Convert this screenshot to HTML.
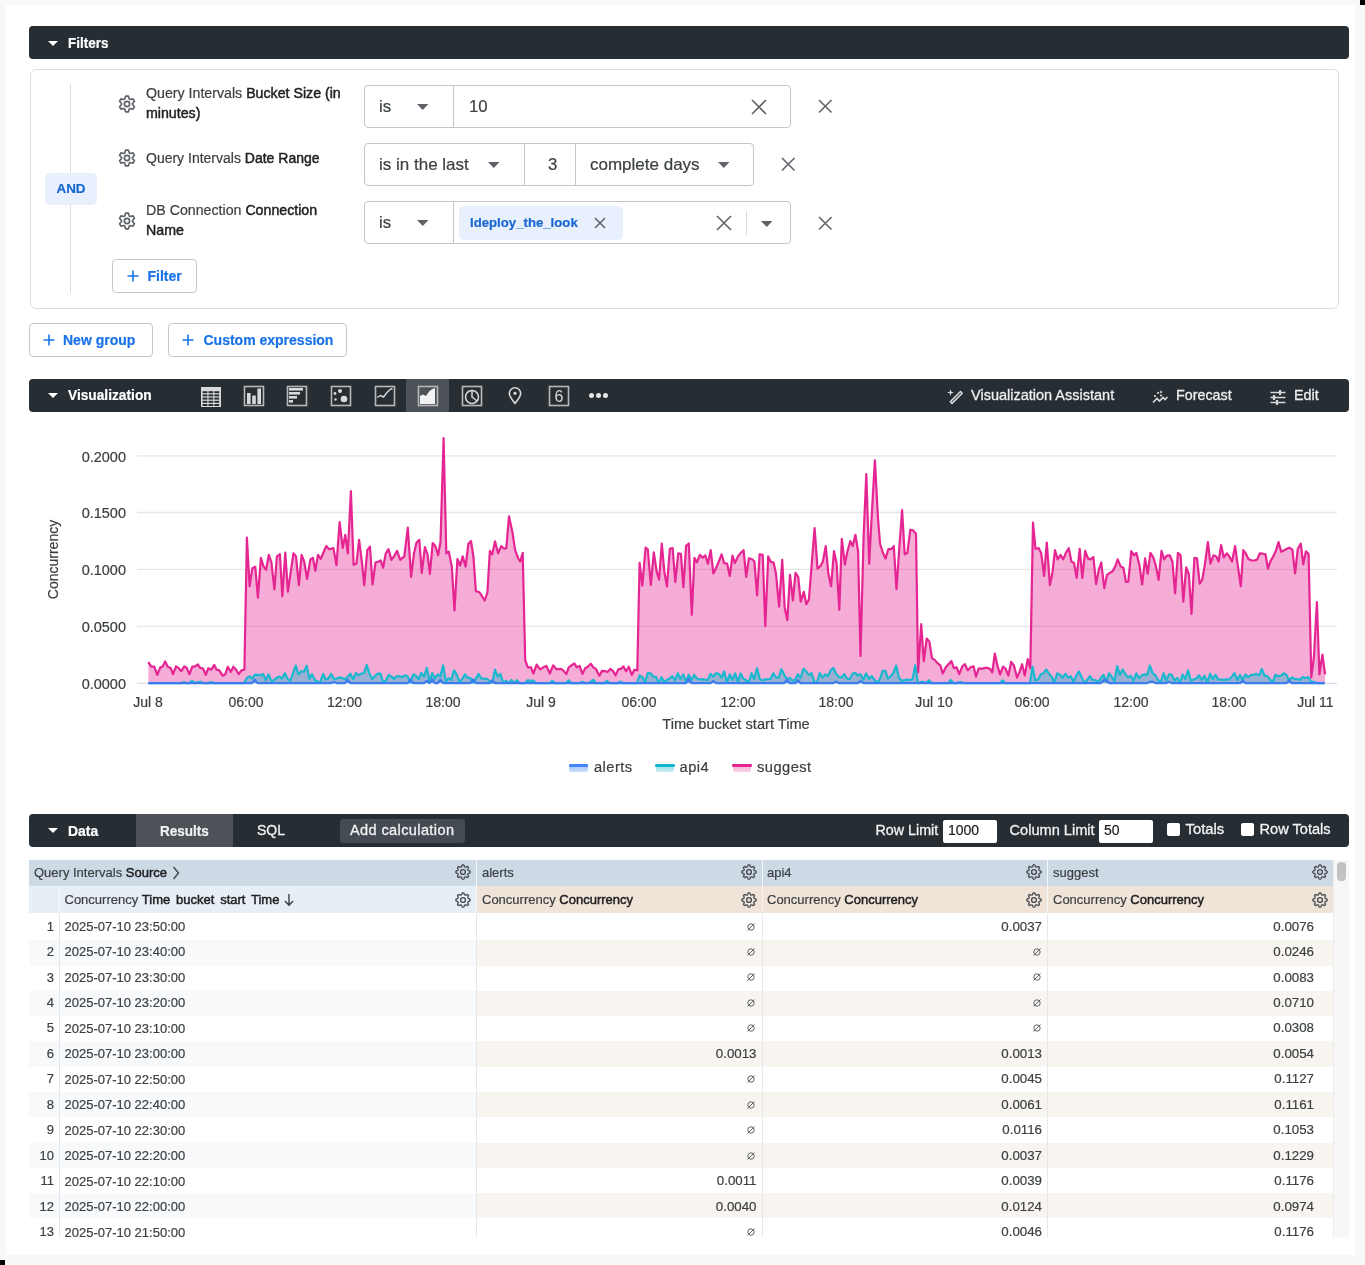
<!DOCTYPE html>
<html><head><meta charset="utf-8">
<style>
*{box-sizing:border-box;margin:0;padding:0}
html,body{width:1365px;height:1265px;overflow:hidden;background:#f7f8f8;font-family:"Liberation Sans",sans-serif;color:#3c4043;-webkit-text-stroke-width:0.2px}
.abs{position:absolute}
.tx{white-space:nowrap}
.med{-webkit-text-stroke:0.25px currentColor}
.m{-webkit-text-stroke:0.45px #202124;color:#202124}
b{font-weight:bold}
</style></head><body>
<div id="wrap" style="position:absolute;left:0;top:0;width:1365px;height:1265px;will-change:transform">
<div class="abs" style="left:6px;top:5px;width:1349px;height:1250px;background:#fff"></div>
<div class="abs" style="left:1360px;top:0;width:5px;height:5px;background:#000"></div>
<div class="abs" style="left:0;top:1260px;width:5px;height:5px;background:#000"></div>

<div class="abs" style="left:29px;top:26px;width:1320px;height:33px;background:#262d33;border-radius:4px"></div>
<svg class="abs" style="left:48.0px;top:40.5px" width="10" height="5"><path d="M0,0 L10,0 L5.0,5Z" fill="#fff"/></svg>
<div class="abs tx" style="left:68px;top:33.8px;font-size:15px;line-height:18.0px;color:#fff;font-weight:bold;transform:scaleX(0.9);transform-origin:0 50%">Filters</div>
<div class="abs" style="left:30px;top:69px;width:1309px;height:240px;border:1px solid #dcdcdc;border-radius:6px"></div>
<div class="abs" style="left:70px;top:84px;width:1px;height:209px;background:#dadce0"></div>
<div class="abs" style="left:45px;top:173px;width:52px;height:32px;background:#e8f0fe;border-radius:5px"></div>
<div class="abs tx" style="left:56.5px;top:181.0px;font-size:13.4px;line-height:16.1px;color:#1967d2;font-weight:bold;">AND</div>
<svg class="abs" style="left:115.0px;top:92.0px" width="24" height="24" viewBox="0 0 24 24"><path d="M9.68,7.02 L10.63,4.22 L13.37,4.22 L14.32,7.02 L15.15,7.49 L18.05,6.92 L19.42,9.30 L17.48,11.52 L17.48,12.48 L19.42,14.70 L18.05,17.08 L15.15,16.51 L14.32,16.98 L13.37,19.78 L10.63,19.78 L9.68,16.98 L8.85,16.51 L5.95,17.08 L4.58,14.70 L6.52,12.48 L6.52,11.52 L4.58,9.30 L5.95,6.92 L8.85,7.49Z" fill="none" stroke="#5f6368" stroke-width="1.70" stroke-linejoin="round"/><circle cx="12" cy="12" r="2.6" fill="none" stroke="#5f6368" stroke-width="1.70"/></svg>
<svg class="abs" style="left:115.0px;top:146.0px" width="24" height="24" viewBox="0 0 24 24"><path d="M9.68,7.02 L10.63,4.22 L13.37,4.22 L14.32,7.02 L15.15,7.49 L18.05,6.92 L19.42,9.30 L17.48,11.52 L17.48,12.48 L19.42,14.70 L18.05,17.08 L15.15,16.51 L14.32,16.98 L13.37,19.78 L10.63,19.78 L9.68,16.98 L8.85,16.51 L5.95,17.08 L4.58,14.70 L6.52,12.48 L6.52,11.52 L4.58,9.30 L5.95,6.92 L8.85,7.49Z" fill="none" stroke="#5f6368" stroke-width="1.70" stroke-linejoin="round"/><circle cx="12" cy="12" r="2.6" fill="none" stroke="#5f6368" stroke-width="1.70"/></svg>
<svg class="abs" style="left:115.0px;top:208.5px" width="24" height="24" viewBox="0 0 24 24"><path d="M9.68,7.02 L10.63,4.22 L13.37,4.22 L14.32,7.02 L15.15,7.49 L18.05,6.92 L19.42,9.30 L17.48,11.52 L17.48,12.48 L19.42,14.70 L18.05,17.08 L15.15,16.51 L14.32,16.98 L13.37,19.78 L10.63,19.78 L9.68,16.98 L8.85,16.51 L5.95,17.08 L4.58,14.70 L6.52,12.48 L6.52,11.52 L4.58,9.30 L5.95,6.92 L8.85,7.49Z" fill="none" stroke="#5f6368" stroke-width="1.70" stroke-linejoin="round"/><circle cx="12" cy="12" r="2.6" fill="none" stroke="#5f6368" stroke-width="1.70"/></svg>
<div class="abs" style="left:146px;top:84px;font-size:14.2px;line-height:19.5px;color:#3c4043;width:215px">Query Intervals <span class="m">Bucket Size (in minutes)</span></div>
<div class="abs tx" style="left:146px;top:149.6px;font-size:14px;line-height:16.8px;color:#3c4043;font-weight:normal;">Query Intervals <span class="m">Date Range</span></div>
<div class="abs" style="left:146px;top:201px;font-size:14.2px;line-height:19.5px;color:#3c4043;width:200px">DB Connection <span class="m">Connection Name</span></div>
<div class="abs" style="left:364px;top:85px;width:427px;height:43px;border:1px solid #c6c6c6;border-radius:4px"></div><div class="abs" style="left:453px;top:85px;width:1px;height:43px;background:#c6c6c6"></div>
<div class="abs tx" style="left:379px;top:96.9px;font-size:16.8px;line-height:20.2px;color:#3c4043;font-weight:normal;">is</div>
<svg class="abs" style="left:417.2px;top:103.5px" width="11.5" height="6"><path d="M0,0 L11.5,0 L5.75,6Z" fill="#5f6368"/></svg>
<div class="abs tx" style="left:469px;top:96.9px;font-size:16.8px;line-height:20.2px;color:#3c4043;font-weight:normal;">10</div>
<svg class="abs" style="left:750.0px;top:97.5px" width="18" height="18"><path d="M2,2 L16,16 M16,2 L2,16" stroke="#62666b" stroke-width="1.65"/></svg>
<svg class="abs" style="left:817.2px;top:97.8px" width="16.5" height="16.5"><path d="M2,2 L14.5,14.5 M14.5,2 L2,14.5" stroke="#62666b" stroke-width="1.65"/></svg>
<div class="abs" style="left:364px;top:143px;width:390px;height:43px;border:1px solid #c6c6c6;border-radius:4px"></div><div class="abs" style="left:524px;top:143px;width:1px;height:43px;background:#c6c6c6"></div><div class="abs" style="left:575px;top:143px;width:1px;height:43px;background:#c6c6c6"></div>
<div class="abs tx" style="left:379px;top:154.8px;font-size:17px;line-height:20.4px;color:#3c4043;font-weight:normal;">is in the last</div>
<svg class="abs" style="left:487.8px;top:162.0px" width="11.5" height="6"><path d="M0,0 L11.5,0 L5.75,6Z" fill="#5f6368"/></svg>
<div class="abs tx" style="left:548px;top:154.9px;font-size:16.8px;line-height:20.2px;color:#3c4043;font-weight:normal;">3</div>
<div class="abs tx" style="left:590px;top:154.8px;font-size:17px;line-height:20.4px;color:#3c4043;font-weight:normal;">complete days</div>
<svg class="abs" style="left:718.2px;top:162.0px" width="11.5" height="6"><path d="M0,0 L11.5,0 L5.75,6Z" fill="#5f6368"/></svg>
<svg class="abs" style="left:779.8px;top:156.2px" width="16.5" height="16.5"><path d="M2,2 L14.5,14.5 M14.5,2 L2,14.5" stroke="#62666b" stroke-width="1.65"/></svg>
<div class="abs" style="left:364px;top:201px;width:427px;height:43px;border:1px solid #c6c6c6;border-radius:4px"></div><div class="abs" style="left:453px;top:201px;width:1px;height:43px;background:#c6c6c6"></div>
<div class="abs tx" style="left:379px;top:212.9px;font-size:16.8px;line-height:20.2px;color:#3c4043;font-weight:normal;">is</div>
<svg class="abs" style="left:417.2px;top:220.0px" width="11.5" height="6"><path d="M0,0 L11.5,0 L5.75,6Z" fill="#5f6368"/></svg>
<div class="abs" style="left:459px;top:205.5px;width:164px;height:34px;background:#e8f0fe;border-radius:5px"></div>
<div class="abs tx" style="left:470px;top:214.6px;font-size:13.2px;line-height:15.8px;color:#1967d2;font-weight:bold;">ldeploy_the_look</div>
<svg class="abs" style="left:592.5px;top:215.5px" width="14" height="14"><path d="M2,2 L12,12 M12,2 L2,12" stroke="#5f6368" stroke-width="1.5"/></svg>
<svg class="abs" style="left:715.0px;top:214.0px" width="18" height="18"><path d="M2,2 L16,16 M16,2 L2,16" stroke="#62666b" stroke-width="1.65"/></svg>
<div class="abs" style="left:746px;top:211px;width:1px;height:24px;background:#dadce0"></div>
<svg class="abs" style="left:760.8px;top:220.5px" width="11.5" height="6"><path d="M0,0 L11.5,0 L5.75,6Z" fill="#5f6368"/></svg>
<svg class="abs" style="left:817.2px;top:214.8px" width="16.5" height="16.5"><path d="M2,2 L14.5,14.5 M14.5,2 L2,14.5" stroke="#62666b" stroke-width="1.65"/></svg>
<div class="abs" style="left:112px;top:259px;width:85px;height:34px;border:1px solid #c6c6c6;border-radius:4px;background:#fff"></div><svg class="abs" style="left:126.5px;top:270.0px" width="12" height="12"><path d="M6,0.5 V11.5 M0.5,6 H11.5" stroke="#1a73e8" stroke-width="1.6"/></svg><div class="abs tx" style="left:147.5px;top:267.6px;font-size:14px;line-height:16.8px;color:#1a73e8;font-weight:bold;">Filter</div>
<div class="abs" style="left:29px;top:323px;width:124px;height:34px;border:1px solid #c6c6c6;border-radius:4px;background:#fff"></div><svg class="abs" style="left:43px;top:334.0px" width="12" height="12"><path d="M6,0.5 V11.5 M0.5,6 H11.5" stroke="#1a73e8" stroke-width="1.6"/></svg><div class="abs tx" style="left:63px;top:331.6px;font-size:14px;line-height:16.8px;color:#1a73e8;font-weight:bold;">New group</div>
<div class="abs" style="left:168px;top:323px;width:179px;height:34px;border:1px solid #c6c6c6;border-radius:4px;background:#fff"></div><svg class="abs" style="left:182px;top:334.0px" width="12" height="12"><path d="M6,0.5 V11.5 M0.5,6 H11.5" stroke="#1a73e8" stroke-width="1.6"/></svg><div class="abs tx" style="left:203.5px;top:331.6px;font-size:14px;line-height:16.8px;color:#1a73e8;font-weight:bold;">Custom expression</div>
<div class="abs" style="left:29px;top:379px;width:1320px;height:33px;background:#262d33;border-radius:4px"></div>
<svg class="abs" style="left:48.0px;top:393.0px" width="10" height="5"><path d="M0,0 L10,0 L5.0,5Z" fill="#fff"/></svg>
<div class="abs tx" style="left:68px;top:386.3px;font-size:15px;line-height:18.0px;color:#fff;font-weight:bold;transform:scaleX(0.915);transform-origin:0 50%">Visualization</div>
<div class="abs" style="left:406px;top:379px;width:43px;height:33px;background:#4c5258"></div>
<svg class="abs" style="left:199.5px;top:385.5px" width="22" height="22" viewBox="0 0 22 22"><rect x="1" y="1" width="20" height="20" fill="#d9d9d9"/><rect x="2.6" y="5.2" width="4.8" height="2" fill="#262d33"/><rect x="8.5" y="5.2" width="4.8" height="2" fill="#262d33"/><rect x="14.4" y="5.2" width="4.8" height="2" fill="#262d33"/><rect x="2.6" y="8.4" width="4.8" height="2" fill="#262d33"/><rect x="8.5" y="8.4" width="4.8" height="2" fill="#262d33"/><rect x="14.4" y="8.4" width="4.8" height="2" fill="#262d33"/><rect x="2.6" y="11.6" width="4.8" height="2" fill="#262d33"/><rect x="8.5" y="11.6" width="4.8" height="2" fill="#262d33"/><rect x="14.4" y="11.6" width="4.8" height="2" fill="#262d33"/><rect x="2.6" y="14.8" width="4.8" height="2" fill="#262d33"/><rect x="8.5" y="14.8" width="4.8" height="2" fill="#262d33"/><rect x="14.4" y="14.8" width="4.8" height="2" fill="#262d33"/><rect x="2.6" y="18.0" width="4.8" height="2" fill="#262d33"/><rect x="8.5" y="18.0" width="4.8" height="2" fill="#262d33"/><rect x="14.4" y="18.0" width="4.8" height="2" fill="#262d33"/></svg>
<svg class="abs" style="left:242.7px;top:385px" width="22" height="22" viewBox="0 0 22 22"><rect x="1.5" y="1.5" width="19" height="19" fill="none" stroke="#b8b8b8" stroke-width="1.6"/><rect x="4" y="8" width="3.6" height="11" fill="#d9d9d9"/><rect x="9.2" y="10.5" width="3.6" height="8.5" fill="#d9d9d9"/><rect x="14.4" y="3.5" width="3.6" height="15.5" fill="#d9d9d9"/></svg>
<svg class="abs" style="left:286.2px;top:385px" width="22" height="22" viewBox="0 0 22 22"><rect x="1.5" y="1.5" width="19" height="19" fill="none" stroke="#b8b8b8" stroke-width="1.6"/><rect x="3" y="3" width="14" height="2.6" fill="#d9d9d9"/><rect x="3" y="7" width="11" height="2.6" fill="#d9d9d9"/><rect x="3" y="11" width="8" height="2.6" fill="#d9d9d9"/><rect x="3" y="15" width="4" height="2.6" fill="#d9d9d9"/></svg>
<svg class="abs" style="left:330px;top:385px" width="22" height="22" viewBox="0 0 22 22"><rect x="1.5" y="1.5" width="19" height="19" fill="none" stroke="#b8b8b8" stroke-width="1.6"/><circle cx="10" cy="6" r="2" fill="#d9d9d9"/><circle cx="5" cy="8.5" r="1.4" fill="#d9d9d9"/><circle cx="5.5" cy="14.5" r="1.2" fill="#d9d9d9"/><circle cx="14" cy="14" r="3.3" fill="#d9d9d9"/></svg>
<svg class="abs" style="left:373.5px;top:385px" width="22" height="22" viewBox="0 0 22 22"><rect x="1.5" y="1.5" width="19" height="19" fill="none" stroke="#b8b8b8" stroke-width="1.6"/><path d="M3,12.5 L6.5,10.5 L9.5,12 L13,7.5 L16,4.5 L18.5,3.5" fill="none" stroke="#d9d9d9" stroke-width="1.4"/></svg>
<svg class="abs" style="left:417px;top:385px" width="22" height="22" viewBox="0 0 22 22"><rect x="1.5" y="1.5" width="19" height="19" fill="none" stroke="#b8b8b8" stroke-width="1.6"/><path d="M3,11 L6,9.5 L9,11 L12.5,6 L15.5,4 L18,3 L18,19 L3,19Z" fill="#f2f2f2"/></svg>
<svg class="abs" style="left:460.5px;top:385px" width="22" height="22" viewBox="0 0 22 22"><rect x="1.5" y="1.5" width="19" height="19" fill="none" stroke="#b8b8b8" stroke-width="1.6"/><circle cx="11" cy="12" r="6.5" fill="none" stroke="#d9d9d9" stroke-width="1.5"/><path d="M11,5.5 V12 L16,16" fill="none" stroke="#d9d9d9" stroke-width="1.5"/></svg>
<svg class="abs" style="left:507px;top:387px" width="16" height="18" viewBox="0 0 16 18"><path d="M8,16.5 C5,12.5 2.3,9.5 2.3,6.5 A5.7,5.7 0 0 1 13.7,6.5 C13.7,9.5 11,12.5 8,16.5Z" fill="none" stroke="#d9d9d9" stroke-width="1.6" stroke-linejoin="round"/><circle cx="8" cy="6.3" r="1.6" fill="#d9d9d9"/></svg>
<svg class="abs" style="left:547.5px;top:385px" width="22" height="22" viewBox="0 0 22 22"><rect x="1.5" y="1.5" width="19" height="19" fill="none" stroke="#b8b8b8" stroke-width="1.6"/><text x="11" y="17" text-anchor="middle" font-family="Liberation Sans" font-size="16" fill="#d9d9d9">6</text></svg>
<div class="abs" style="left:589.0px;top:393.2px;width:5.2px;height:5.2px;border-radius:50%;background:#e6e6e6"></div>
<div class="abs" style="left:595.8px;top:393.2px;width:5.2px;height:5.2px;border-radius:50%;background:#e6e6e6"></div>
<div class="abs" style="left:602.6px;top:393.2px;width:5.2px;height:5.2px;border-radius:50%;background:#e6e6e6"></div>
<svg class="abs" style="left:945px;top:388px" width="19" height="17" viewBox="0 0 19 17"><path d="M5.5,1 L6.3,3.7 L9,4.5 L6.3,5.3 L5.5,8 L4.7,5.3 L2,4.5 L4.7,3.7Z" fill="#d9d9d9"/><path d="M15.5,3.5 L17.2,5.2 L7,15.4 L5.3,13.7Z" fill="none" stroke="#d9d9d9" stroke-width="1.6" stroke-linejoin="round"/></svg>
<div class="abs tx" style="left:971px;top:386.8px;font-size:14.5px;line-height:17.4px;color:#eeeeee;font-weight:normal;-webkit-text-stroke:0.3px #eeeeee">Visualization Assistant</div>
<svg class="abs" style="left:1151px;top:389px" width="18" height="16" viewBox="0 0 18 16"><path d="M2,13.5 L6,9.5 L8.5,12 L12,8.5 L14,10.5 L16.5,8" fill="none" stroke="#d9d9d9" stroke-width="1.7"/><circle cx="4" cy="7" r="1.1" fill="#d9d9d9"/><circle cx="7" cy="4" r="1.1" fill="#d9d9d9"/><circle cx="10" cy="6.5" r="1.1" fill="#d9d9d9"/><path d="M10,1 L10.6,2.4 L12,3 L10.6,3.6 L10,5 L9.4,3.6 L8,3 L9.4,2.4Z" fill="#d9d9d9"/></svg>
<div class="abs tx" style="left:1176px;top:386.9px;font-size:14.3px;line-height:17.2px;color:#eeeeee;font-weight:normal;-webkit-text-stroke:0.3px #eeeeee">Forecast</div>
<svg class="abs" style="left:1269px;top:388.5px" width="18" height="17" viewBox="0 0 18 17"><path d="M1.5,3.5 H16.5 M1.5,8.5 H16.5 M1.5,13.5 H16.5" stroke="#d9d9d9" stroke-width="1.7"/><path d="M11,1 V6 M5,6 V11 M8,11 V16" stroke="#d9d9d9" stroke-width="2.2"/></svg>
<div class="abs tx" style="left:1294px;top:386.9px;font-size:14.3px;line-height:17.2px;color:#eeeeee;font-weight:normal;-webkit-text-stroke:0.3px #eeeeee">Edit</div>
<svg class="abs" style="left:0;top:0" width="1365" height="800"><line x1="137" y1="455.9" x2="1337" y2="455.9" stroke="#e6e6e6" stroke-width="1.3"/><line x1="137" y1="512.5" x2="1337" y2="512.5" stroke="#e6e6e6" stroke-width="1.3"/><line x1="137" y1="569.3" x2="1337" y2="569.3" stroke="#e6e6e6" stroke-width="1.3"/><line x1="137" y1="626.3" x2="1337" y2="626.3" stroke="#e6e6e6" stroke-width="1.3"/><line x1="137" y1="683.3" x2="1337" y2="683.3" stroke="#d8dbe8" stroke-width="1.3"/><polygon points="148.3,683.1 148.3,662.2 151.3,666.7 154.3,666.7 157.3,674.9 160.3,667.4 162.5,666.7 165.2,661.4 167.8,666.7 170.8,668.2 173.0,674.2 176.0,666.4 178.7,668.2 181.3,671.2 184.3,666.4 186.8,667.9 189.5,674.2 192.3,666.7 194.8,666.7 197.8,664.4 200.1,667.9 203.1,668.5 205.8,674.9 208.3,668.2 211.3,669.7 214.3,664.9 216.6,669.7 219.3,670.4 222.6,675.7 225.3,674.2 227.8,666.7 230.8,671.9 233.4,666.7 236.1,669.7 238.8,674.2 241.4,670.4 244.4,669.7 246.9,537.5 249.6,586.3 252.3,568.3 255.3,566.8 257.9,597.6 260.9,557.8 263.4,566.1 266.1,569.8 268.8,554.8 271.4,562.3 274.4,589.3 276.9,556.3 279.9,554.1 282.3,596.1 285.3,552.6 287.9,591.6 293.4,553.3 296.0,556.4 298.9,585.1 301.6,554.9 304.2,561.5 307.1,579.0 310.4,559.4 312.9,557.8 315.3,570.7 318.0,554.9 320.7,559.0 323.1,553.3 326.2,546.1 329.3,549.2 333.4,548.1 336.5,565.2 339.6,522.0 342.7,548.1 345.3,534.8 347.8,553.3 350.9,491.2 353.6,564.6 356.4,563.6 359.1,539.9 362.2,564.6 364.2,585.1 367.3,550.2 370.0,546.7 372.5,584.5 375.5,562.5 378.6,561.5 380.7,560.5 383.1,567.7 385.8,553.3 388.5,549.2 391.4,559.9 394.0,556.4 397.1,550.8 400.2,559.9 404.3,556.4 407.8,527.6 411.1,576.9 414.0,553.3 416.6,542.6 419.3,539.9 421.8,572.8 424.9,547.1 427.5,554.3 429.9,573.8 432.7,543.0 435.4,546.1 438.1,555.3 440.5,542.0 443.6,438.2 446.3,553.3 448.8,551.6 451.8,566.6 454.5,610.4 457.4,559.0 460.1,565.6 462.7,556.4 465.6,566.6 468.3,544.0 471.0,541.0 473.4,556.4 475.9,591.3 479.6,592.3 484.7,600.5 487.4,592.3 489.9,550.8 492.3,554.3 495.0,541.4 498.1,553.3 501.2,546.1 504.2,548.8 506.3,548.1 509.0,516.3 512.5,532.7 515.1,550.2 518.2,558.4 520.3,561.5 522.7,552.9 525.2,660.1 527.9,667.3 531.0,667.3 533.4,673.5 536.7,664.6 540.2,669.4 543.3,667.3 546.4,665.9 549.9,673.5 553.1,665.3 556.6,669.4 560.7,668.8 563.2,670.4 566.3,674.1 568.7,667.4 571.7,665.2 574.3,663.4 576.8,667.4 579.5,665.9 582.5,673.9 585.2,668.2 587.8,666.7 590.8,663.7 593.3,667.4 596.0,668.9 599.3,675.7 602.0,670.9 605.0,671.2 607.7,671.9 610.3,668.9 612.9,670.9 615.6,675.4 618.3,669.4 620.8,668.9 623.4,666.4 626.1,671.2 628.8,666.7 631.8,674.9 634.3,669.7 637.3,670.4 639.6,562.8 642.3,585.6 645.6,547.7 647.8,549.5 650.8,584.8 653.8,552.3 656.8,572.1 659.1,579.6 661.8,543.5 664.4,572.1 666.9,586.3 669.9,548.8 672.6,548.0 675.3,581.8 678.2,553.3 680.9,553.8 683.4,587.1 686.1,545.8 688.8,543.5 691.8,614.9 694.4,557.8 696.9,562.3 699.9,554.8 702.6,557.8 705.3,555.3 707.9,563.8 710.7,550.2 713.4,573.4 716.4,567.3 718.9,561.1 721.6,554.3 724.2,563.1 727.1,563.6 729.8,575.9 732.5,555.7 734.9,563.1 738.0,556.4 740.7,552.9 743.6,550.2 746.2,576.9 748.9,558.4 751.8,559.0 754.4,561.5 757.1,595.4 759.6,554.3 762.7,554.9 765.3,626.2 768.2,556.4 770.9,561.9 773.6,562.5 776.0,573.8 779.1,606.7 782.2,559.9 784.7,607.7 787.3,620.1 790.0,574.9 792.9,600.5 795.5,572.8 798.2,576.9 800.7,601.6 803.8,591.9 806.4,604.2 808.9,599.5 812.0,560.5 814.6,528.2 817.5,568.7 820.8,565.6 822.9,561.5 825.7,546.1 828.4,573.8 831.1,586.2 834.0,551.2 836.6,563.6 839.3,609.8 841.8,538.9 844.9,564.6 847.2,552.3 850.3,541.0 852.7,546.1 855.4,534.8 858.1,551.2 860.5,656.0 863.6,536.8 866.3,474.2 869.2,563.6 871.8,514.2 874.9,460.4 878.0,518.4 880.1,544.0 883.1,553.3 885.6,558.4 888.3,549.2 891.4,549.2 893.8,546.1 896.5,589.2 899.2,549.2 902.1,510.1 904.7,554.3 907.4,552.9 910.3,529.7 912.9,530.3 916.0,533.8 918.1,672.4 921.2,624.2 923.8,661.1 926.7,638.5 929.4,641.6 932.0,658.1 934.9,660.1 937.6,663.2 940.3,665.3 942.7,673.5 945.8,667.3 948.5,664.2 951.4,661.1 954.0,668.3 956.7,667.3 959.2,674.1 962.3,666.3 964.9,664.2 967.8,670.4 970.5,667.3 973.6,666.3 976.0,676.6 978.7,668.3 981.8,668.8 984.9,667.9 987.2,667.9 989.9,668.8 992.3,672.4 994.8,653.5 997.5,665.9 1000.1,674.5 1003.0,666.7 1005.7,668.8 1008.4,675.5 1011.2,661.8 1013.9,665.3 1017.0,677.6 1019.4,672.4 1022.1,664.2 1024.8,675.5 1027.7,659.1 1030.3,668.3 1033.0,522.5 1035.5,548.8 1038.6,548.1 1041.2,553.3 1044.1,575.9 1046.8,542.6 1049.9,585.1 1052.3,573.8 1055.0,550.2 1057.7,559.4 1060.5,554.9 1063.2,559.4 1065.9,552.9 1068.8,548.1 1071.4,561.5 1074.1,563.1 1076.6,577.9 1079.7,548.8 1082.3,577.9 1085.2,550.8 1087.9,558.4 1090.5,559.4 1093.4,557.0 1096.1,584.1 1098.8,569.7 1101.2,562.5 1104.3,588.2 1107.0,574.9 1109.9,572.8 1112.5,571.4 1115.2,566.6 1117.7,559.4 1120.7,566.6 1123.4,567.7 1125.9,582.0 1128.3,581.6 1131.3,551.2 1134.0,555.3 1136.4,552.9 1139.5,565.6 1142.2,584.5 1145.1,558.4 1147.7,573.8 1150.4,552.9 1153.3,557.4 1156.0,566.6 1158.6,580.0 1161.5,550.8 1164.2,559.4 1166.8,555.7 1169.7,555.3 1172.4,561.5 1175.1,593.3 1177.9,552.9 1180.6,555.3 1183.3,601.6 1186.2,567.3 1188.8,573.8 1191.5,613.9 1194.4,557.8 1197.0,558.4 1199.7,583.7 1202.2,580.0 1204.7,565.6 1207.9,542.0 1210.4,563.6 1213.5,555.3 1216.2,556.4 1218.6,561.5 1221.1,545.1 1223.8,557.4 1226.8,553.3 1229.3,556.4 1232.0,561.5 1235.1,546.1 1237.5,563.6 1240.8,586.2 1243.3,550.2 1245.7,553.3 1248.4,559.0 1251.5,560.5 1254.6,560.5 1257.3,559.4 1259.7,553.3 1262.8,553.7 1265.5,554.3 1267.9,568.7 1270.3,561.6 1273.3,556.3 1275.8,551.1 1278.5,542.1 1281.2,551.8 1284.3,550.3 1286.8,548.8 1289.4,547.8 1292.4,549.6 1295.1,573.3 1297.8,548.8 1300.8,543.6 1303.3,564.3 1305.9,551.4 1308.6,554.1 1311.3,677.3 1313.9,657.0 1316.9,602.2 1319.4,674.3 1322.4,654.7 1325.1,674.3 1325.1,683.1" fill="#e52592" fill-opacity="0.38"/><polyline points="148.3,662.2 151.3,666.7 154.3,666.7 157.3,674.9 160.3,667.4 162.5,666.7 165.2,661.4 167.8,666.7 170.8,668.2 173.0,674.2 176.0,666.4 178.7,668.2 181.3,671.2 184.3,666.4 186.8,667.9 189.5,674.2 192.3,666.7 194.8,666.7 197.8,664.4 200.1,667.9 203.1,668.5 205.8,674.9 208.3,668.2 211.3,669.7 214.3,664.9 216.6,669.7 219.3,670.4 222.6,675.7 225.3,674.2 227.8,666.7 230.8,671.9 233.4,666.7 236.1,669.7 238.8,674.2 241.4,670.4 244.4,669.7 246.9,537.5 249.6,586.3 252.3,568.3 255.3,566.8 257.9,597.6 260.9,557.8 263.4,566.1 266.1,569.8 268.8,554.8 271.4,562.3 274.4,589.3 276.9,556.3 279.9,554.1 282.3,596.1 285.3,552.6 287.9,591.6 293.4,553.3 296.0,556.4 298.9,585.1 301.6,554.9 304.2,561.5 307.1,579.0 310.4,559.4 312.9,557.8 315.3,570.7 318.0,554.9 320.7,559.0 323.1,553.3 326.2,546.1 329.3,549.2 333.4,548.1 336.5,565.2 339.6,522.0 342.7,548.1 345.3,534.8 347.8,553.3 350.9,491.2 353.6,564.6 356.4,563.6 359.1,539.9 362.2,564.6 364.2,585.1 367.3,550.2 370.0,546.7 372.5,584.5 375.5,562.5 378.6,561.5 380.7,560.5 383.1,567.7 385.8,553.3 388.5,549.2 391.4,559.9 394.0,556.4 397.1,550.8 400.2,559.9 404.3,556.4 407.8,527.6 411.1,576.9 414.0,553.3 416.6,542.6 419.3,539.9 421.8,572.8 424.9,547.1 427.5,554.3 429.9,573.8 432.7,543.0 435.4,546.1 438.1,555.3 440.5,542.0 443.6,438.2 446.3,553.3 448.8,551.6 451.8,566.6 454.5,610.4 457.4,559.0 460.1,565.6 462.7,556.4 465.6,566.6 468.3,544.0 471.0,541.0 473.4,556.4 475.9,591.3 479.6,592.3 484.7,600.5 487.4,592.3 489.9,550.8 492.3,554.3 495.0,541.4 498.1,553.3 501.2,546.1 504.2,548.8 506.3,548.1 509.0,516.3 512.5,532.7 515.1,550.2 518.2,558.4 520.3,561.5 522.7,552.9 525.2,660.1 527.9,667.3 531.0,667.3 533.4,673.5 536.7,664.6 540.2,669.4 543.3,667.3 546.4,665.9 549.9,673.5 553.1,665.3 556.6,669.4 560.7,668.8 563.2,670.4 566.3,674.1 568.7,667.4 571.7,665.2 574.3,663.4 576.8,667.4 579.5,665.9 582.5,673.9 585.2,668.2 587.8,666.7 590.8,663.7 593.3,667.4 596.0,668.9 599.3,675.7 602.0,670.9 605.0,671.2 607.7,671.9 610.3,668.9 612.9,670.9 615.6,675.4 618.3,669.4 620.8,668.9 623.4,666.4 626.1,671.2 628.8,666.7 631.8,674.9 634.3,669.7 637.3,670.4 639.6,562.8 642.3,585.6 645.6,547.7 647.8,549.5 650.8,584.8 653.8,552.3 656.8,572.1 659.1,579.6 661.8,543.5 664.4,572.1 666.9,586.3 669.9,548.8 672.6,548.0 675.3,581.8 678.2,553.3 680.9,553.8 683.4,587.1 686.1,545.8 688.8,543.5 691.8,614.9 694.4,557.8 696.9,562.3 699.9,554.8 702.6,557.8 705.3,555.3 707.9,563.8 710.7,550.2 713.4,573.4 716.4,567.3 718.9,561.1 721.6,554.3 724.2,563.1 727.1,563.6 729.8,575.9 732.5,555.7 734.9,563.1 738.0,556.4 740.7,552.9 743.6,550.2 746.2,576.9 748.9,558.4 751.8,559.0 754.4,561.5 757.1,595.4 759.6,554.3 762.7,554.9 765.3,626.2 768.2,556.4 770.9,561.9 773.6,562.5 776.0,573.8 779.1,606.7 782.2,559.9 784.7,607.7 787.3,620.1 790.0,574.9 792.9,600.5 795.5,572.8 798.2,576.9 800.7,601.6 803.8,591.9 806.4,604.2 808.9,599.5 812.0,560.5 814.6,528.2 817.5,568.7 820.8,565.6 822.9,561.5 825.7,546.1 828.4,573.8 831.1,586.2 834.0,551.2 836.6,563.6 839.3,609.8 841.8,538.9 844.9,564.6 847.2,552.3 850.3,541.0 852.7,546.1 855.4,534.8 858.1,551.2 860.5,656.0 863.6,536.8 866.3,474.2 869.2,563.6 871.8,514.2 874.9,460.4 878.0,518.4 880.1,544.0 883.1,553.3 885.6,558.4 888.3,549.2 891.4,549.2 893.8,546.1 896.5,589.2 899.2,549.2 902.1,510.1 904.7,554.3 907.4,552.9 910.3,529.7 912.9,530.3 916.0,533.8 918.1,672.4 921.2,624.2 923.8,661.1 926.7,638.5 929.4,641.6 932.0,658.1 934.9,660.1 937.6,663.2 940.3,665.3 942.7,673.5 945.8,667.3 948.5,664.2 951.4,661.1 954.0,668.3 956.7,667.3 959.2,674.1 962.3,666.3 964.9,664.2 967.8,670.4 970.5,667.3 973.6,666.3 976.0,676.6 978.7,668.3 981.8,668.8 984.9,667.9 987.2,667.9 989.9,668.8 992.3,672.4 994.8,653.5 997.5,665.9 1000.1,674.5 1003.0,666.7 1005.7,668.8 1008.4,675.5 1011.2,661.8 1013.9,665.3 1017.0,677.6 1019.4,672.4 1022.1,664.2 1024.8,675.5 1027.7,659.1 1030.3,668.3 1033.0,522.5 1035.5,548.8 1038.6,548.1 1041.2,553.3 1044.1,575.9 1046.8,542.6 1049.9,585.1 1052.3,573.8 1055.0,550.2 1057.7,559.4 1060.5,554.9 1063.2,559.4 1065.9,552.9 1068.8,548.1 1071.4,561.5 1074.1,563.1 1076.6,577.9 1079.7,548.8 1082.3,577.9 1085.2,550.8 1087.9,558.4 1090.5,559.4 1093.4,557.0 1096.1,584.1 1098.8,569.7 1101.2,562.5 1104.3,588.2 1107.0,574.9 1109.9,572.8 1112.5,571.4 1115.2,566.6 1117.7,559.4 1120.7,566.6 1123.4,567.7 1125.9,582.0 1128.3,581.6 1131.3,551.2 1134.0,555.3 1136.4,552.9 1139.5,565.6 1142.2,584.5 1145.1,558.4 1147.7,573.8 1150.4,552.9 1153.3,557.4 1156.0,566.6 1158.6,580.0 1161.5,550.8 1164.2,559.4 1166.8,555.7 1169.7,555.3 1172.4,561.5 1175.1,593.3 1177.9,552.9 1180.6,555.3 1183.3,601.6 1186.2,567.3 1188.8,573.8 1191.5,613.9 1194.4,557.8 1197.0,558.4 1199.7,583.7 1202.2,580.0 1204.7,565.6 1207.9,542.0 1210.4,563.6 1213.5,555.3 1216.2,556.4 1218.6,561.5 1221.1,545.1 1223.8,557.4 1226.8,553.3 1229.3,556.4 1232.0,561.5 1235.1,546.1 1237.5,563.6 1240.8,586.2 1243.3,550.2 1245.7,553.3 1248.4,559.0 1251.5,560.5 1254.6,560.5 1257.3,559.4 1259.7,553.3 1262.8,553.7 1265.5,554.3 1267.9,568.7 1270.3,561.6 1273.3,556.3 1275.8,551.1 1278.5,542.1 1281.2,551.8 1284.3,550.3 1286.8,548.8 1289.4,547.8 1292.4,549.6 1295.1,573.3 1297.8,548.8 1300.8,543.6 1303.3,564.3 1305.9,551.4 1308.6,554.1 1311.3,677.3 1313.9,657.0 1316.9,602.2 1319.4,674.3 1322.4,654.7 1325.1,674.3" fill="none" stroke="#e52592" stroke-width="2.2" stroke-linejoin="round"/><polygon points="148.4,683.1 148.4,683.1 151.1,683.1 153.9,683.1 156.6,683.1 159.3,683.1 162.0,683.1 164.8,683.1 167.5,683.1 170.2,683.1 173.0,683.1 175.7,683.1 178.4,683.1 181.1,683.1 183.9,682.2 186.6,683.1 189.3,683.1 192.1,680.9 194.8,683.1 197.5,682.4 200.3,681.7 203.0,683.1 205.7,683.1 208.4,683.1 211.2,682.0 213.9,683.1 216.6,683.1 219.4,683.1 222.1,683.1 224.8,683.1 227.5,683.1 230.3,683.1 233.0,683.1 235.7,683.1 238.5,683.1 241.2,683.1 243.9,683.1 246.6,678.4 249.4,676.3 252.1,678.5 254.8,674.8 257.6,674.7 260.3,675.3 263.0,674.1 265.7,680.3 268.5,674.3 271.2,680.6 273.9,680.4 276.7,677.7 279.4,676.5 282.1,678.6 284.9,673.2 287.6,679.0 290.3,680.8 293.0,673.2 295.8,665.6 298.5,674.5 301.2,671.3 304.0,671.7 306.7,665.8 309.4,678.8 312.1,674.1 314.9,680.1 317.6,681.5 320.3,682.2 323.1,674.0 325.8,679.5 328.5,678.2 331.2,674.0 334.0,679.0 336.7,678.6 339.4,677.3 342.2,677.9 344.9,679.2 347.6,677.0 350.3,673.6 353.1,679.4 355.8,673.1 358.5,675.1 361.3,673.6 364.0,673.0 366.7,665.1 369.4,673.4 372.2,679.1 374.9,676.2 377.6,673.6 380.4,673.6 383.1,682.4 385.8,680.8 388.6,675.1 391.3,676.4 394.0,678.9 396.7,676.4 399.5,676.0 402.2,677.2 404.9,675.3 407.7,676.4 410.4,682.7 413.1,674.6 415.8,675.6 418.6,679.1 421.3,673.0 424.0,676.7 426.8,668.0 429.5,681.4 432.2,673.1 434.9,678.7 437.7,674.3 440.4,676.3 443.1,665.3 445.9,681.6 448.6,678.1 451.3,679.8 454.0,670.4 456.8,674.8 459.5,681.9 462.2,679.3 465.0,674.3 467.7,677.7 470.4,678.1 473.2,682.9 475.9,678.8 478.6,673.9 481.3,678.5 484.1,678.7 486.8,678.9 489.5,680.8 492.3,682.6 495.0,669.7 497.7,676.6 500.4,673.8 503.2,683.1 505.9,680.7 508.6,683.1 511.4,680.0 514.1,683.1 516.8,680.2 519.5,683.1 522.3,683.1 525.0,683.1 527.7,680.2 530.5,680.9 533.2,680.6 535.9,683.1 538.6,683.1 541.4,683.1 544.1,683.1 546.8,683.1 549.6,683.1 552.3,680.9 555.0,683.1 557.8,683.1 560.5,683.1 563.2,683.1 565.9,683.1 568.7,680.4 571.4,683.1 574.1,683.1 576.9,683.1 579.6,683.1 582.3,681.8 585.0,683.1 587.8,683.1 590.5,681.9 593.2,679.8 596.0,683.1 598.7,683.1 601.4,683.1 604.1,683.1 606.9,680.8 609.6,683.1 612.3,683.1 615.1,683.1 617.8,683.1 620.5,681.7 623.2,683.1 626.0,683.1 628.7,683.1 631.4,683.1 634.2,683.1 636.9,683.1 639.6,675.5 642.3,677.1 645.1,682.3 647.8,673.1 650.5,673.3 653.3,676.7 656.0,676.8 658.7,683.1 661.5,677.2 664.2,681.8 666.9,679.9 669.6,678.5 672.4,676.1 675.1,680.4 677.8,673.4 680.6,679.3 683.3,674.4 686.0,681.9 688.7,674.8 691.5,679.8 694.2,675.0 696.9,678.4 699.7,679.5 702.4,679.1 705.1,679.7 707.8,680.1 710.6,673.8 713.3,676.7 716.0,673.1 718.8,674.0 721.5,677.6 724.2,671.5 726.9,682.4 729.7,674.3 732.4,680.0 735.1,673.3 737.9,681.8 740.6,673.5 743.3,678.8 746.1,680.3 748.8,682.6 751.5,673.2 754.2,679.0 757.0,668.3 759.7,678.8 762.4,680.6 765.2,679.3 767.9,679.2 770.6,679.0 773.3,673.3 776.1,677.5 778.8,677.7 781.5,669.1 784.3,675.0 787.0,679.4 789.7,677.8 792.4,680.8 795.2,679.8 797.9,674.3 800.6,677.9 803.4,668.9 806.1,671.3 808.8,674.9 811.5,673.2 814.3,681.8 817.0,682.7 819.7,673.2 822.5,677.4 825.2,674.4 827.9,676.0 830.6,670.4 833.4,668.0 836.1,673.8 838.8,676.9 841.6,677.5 844.3,674.1 847.0,678.5 849.8,679.2 852.5,673.8 855.2,672.9 857.9,675.6 860.7,674.3 863.4,679.9 866.1,673.4 868.9,678.8 871.6,676.1 874.3,679.7 877.0,682.5 879.8,679.4 882.5,671.0 885.2,670.6 888.0,678.6 890.7,676.3 893.4,672.9 896.1,665.6 898.9,677.6 901.6,680.7 904.3,680.1 907.1,679.7 909.8,680.0 912.5,679.3 915.2,665.4 918.0,683.1 920.7,682.1 923.4,681.9 926.2,683.1 928.9,680.2 931.6,683.1 934.4,683.1 937.1,683.1 939.8,683.1 942.5,683.1 945.3,683.1 948.0,683.1 950.7,680.0 953.5,683.1 956.2,683.1 958.9,682.4 961.6,682.2 964.4,683.1 967.1,683.1 969.8,683.1 972.6,683.1 975.3,683.1 978.0,683.1 980.7,683.1 983.5,683.1 986.2,683.1 988.9,683.1 991.7,683.1 994.4,683.1 997.1,683.1 999.8,683.1 1002.6,680.3 1005.3,683.1 1008.0,683.1 1010.8,683.1 1013.5,683.1 1016.2,683.1 1019.0,683.1 1021.7,683.1 1024.4,683.1 1027.1,683.1 1029.9,683.1 1032.6,666.7 1035.3,680.4 1038.1,679.7 1040.8,674.3 1043.5,673.2 1046.2,669.3 1049.0,673.7 1051.7,676.8 1054.4,682.8 1057.2,673.4 1059.9,674.6 1062.6,678.0 1065.3,673.8 1068.1,677.7 1070.8,676.2 1073.5,681.7 1076.3,675.7 1079.0,671.5 1081.7,677.4 1084.4,683.1 1087.2,680.0 1089.9,676.1 1092.6,679.8 1095.4,680.1 1098.1,682.0 1100.8,678.0 1103.5,675.0 1106.3,681.8 1109.0,673.3 1111.7,676.8 1114.5,681.6 1117.2,666.0 1119.9,674.9 1122.7,669.5 1125.4,674.1 1128.1,677.4 1130.8,675.7 1133.6,680.7 1136.3,673.3 1139.0,678.2 1141.8,675.3 1144.5,674.2 1147.2,675.1 1149.9,665.5 1152.7,673.4 1155.4,675.3 1158.1,680.3 1160.9,681.6 1163.6,673.3 1166.3,680.6 1169.0,674.3 1171.8,674.8 1174.5,680.7 1177.2,677.9 1180.0,682.4 1182.7,674.7 1185.4,679.1 1188.1,670.4 1190.9,680.8 1193.6,679.4 1196.3,678.8 1199.1,675.3 1201.8,680.2 1204.5,675.8 1207.3,682.7 1210.0,673.7 1212.7,679.0 1215.4,674.8 1218.2,679.6 1220.9,679.5 1223.6,679.8 1226.4,679.3 1229.1,679.6 1231.8,676.7 1234.5,673.1 1237.3,680.0 1240.0,675.0 1242.7,680.0 1245.5,674.5 1248.2,677.1 1250.9,674.9 1253.6,674.9 1256.4,673.8 1259.1,675.4 1261.8,668.9 1264.6,675.8 1267.3,675.9 1270.0,679.4 1272.7,682.2 1275.5,674.6 1278.2,676.3 1280.9,675.7 1283.7,673.3 1286.4,674.8 1289.1,680.4 1291.9,677.5 1294.6,679.0 1297.3,679.1 1300.0,679.8 1302.8,677.1 1305.5,678.0 1308.2,677.1 1311.0,681.5 1313.7,681.8 1316.4,683.1 1319.1,683.1 1321.9,683.1 1324.6,683.1 1324.6,683.1" fill="#12b5cb" fill-opacity="0.4"/><polyline points="148.4,683.1 151.1,683.1 153.9,683.1 156.6,683.1 159.3,683.1 162.0,683.1 164.8,683.1 167.5,683.1 170.2,683.1 173.0,683.1 175.7,683.1 178.4,683.1 181.1,683.1 183.9,682.2 186.6,683.1 189.3,683.1 192.1,680.9 194.8,683.1 197.5,682.4 200.3,681.7 203.0,683.1 205.7,683.1 208.4,683.1 211.2,682.0 213.9,683.1 216.6,683.1 219.4,683.1 222.1,683.1 224.8,683.1 227.5,683.1 230.3,683.1 233.0,683.1 235.7,683.1 238.5,683.1 241.2,683.1 243.9,683.1 246.6,678.4 249.4,676.3 252.1,678.5 254.8,674.8 257.6,674.7 260.3,675.3 263.0,674.1 265.7,680.3 268.5,674.3 271.2,680.6 273.9,680.4 276.7,677.7 279.4,676.5 282.1,678.6 284.9,673.2 287.6,679.0 290.3,680.8 293.0,673.2 295.8,665.6 298.5,674.5 301.2,671.3 304.0,671.7 306.7,665.8 309.4,678.8 312.1,674.1 314.9,680.1 317.6,681.5 320.3,682.2 323.1,674.0 325.8,679.5 328.5,678.2 331.2,674.0 334.0,679.0 336.7,678.6 339.4,677.3 342.2,677.9 344.9,679.2 347.6,677.0 350.3,673.6 353.1,679.4 355.8,673.1 358.5,675.1 361.3,673.6 364.0,673.0 366.7,665.1 369.4,673.4 372.2,679.1 374.9,676.2 377.6,673.6 380.4,673.6 383.1,682.4 385.8,680.8 388.6,675.1 391.3,676.4 394.0,678.9 396.7,676.4 399.5,676.0 402.2,677.2 404.9,675.3 407.7,676.4 410.4,682.7 413.1,674.6 415.8,675.6 418.6,679.1 421.3,673.0 424.0,676.7 426.8,668.0 429.5,681.4 432.2,673.1 434.9,678.7 437.7,674.3 440.4,676.3 443.1,665.3 445.9,681.6 448.6,678.1 451.3,679.8 454.0,670.4 456.8,674.8 459.5,681.9 462.2,679.3 465.0,674.3 467.7,677.7 470.4,678.1 473.2,682.9 475.9,678.8 478.6,673.9 481.3,678.5 484.1,678.7 486.8,678.9 489.5,680.8 492.3,682.6 495.0,669.7 497.7,676.6 500.4,673.8 503.2,683.1 505.9,680.7 508.6,683.1 511.4,680.0 514.1,683.1 516.8,680.2 519.5,683.1 522.3,683.1 525.0,683.1 527.7,680.2 530.5,680.9 533.2,680.6 535.9,683.1 538.6,683.1 541.4,683.1 544.1,683.1 546.8,683.1 549.6,683.1 552.3,680.9 555.0,683.1 557.8,683.1 560.5,683.1 563.2,683.1 565.9,683.1 568.7,680.4 571.4,683.1 574.1,683.1 576.9,683.1 579.6,683.1 582.3,681.8 585.0,683.1 587.8,683.1 590.5,681.9 593.2,679.8 596.0,683.1 598.7,683.1 601.4,683.1 604.1,683.1 606.9,680.8 609.6,683.1 612.3,683.1 615.1,683.1 617.8,683.1 620.5,681.7 623.2,683.1 626.0,683.1 628.7,683.1 631.4,683.1 634.2,683.1 636.9,683.1 639.6,675.5 642.3,677.1 645.1,682.3 647.8,673.1 650.5,673.3 653.3,676.7 656.0,676.8 658.7,683.1 661.5,677.2 664.2,681.8 666.9,679.9 669.6,678.5 672.4,676.1 675.1,680.4 677.8,673.4 680.6,679.3 683.3,674.4 686.0,681.9 688.7,674.8 691.5,679.8 694.2,675.0 696.9,678.4 699.7,679.5 702.4,679.1 705.1,679.7 707.8,680.1 710.6,673.8 713.3,676.7 716.0,673.1 718.8,674.0 721.5,677.6 724.2,671.5 726.9,682.4 729.7,674.3 732.4,680.0 735.1,673.3 737.9,681.8 740.6,673.5 743.3,678.8 746.1,680.3 748.8,682.6 751.5,673.2 754.2,679.0 757.0,668.3 759.7,678.8 762.4,680.6 765.2,679.3 767.9,679.2 770.6,679.0 773.3,673.3 776.1,677.5 778.8,677.7 781.5,669.1 784.3,675.0 787.0,679.4 789.7,677.8 792.4,680.8 795.2,679.8 797.9,674.3 800.6,677.9 803.4,668.9 806.1,671.3 808.8,674.9 811.5,673.2 814.3,681.8 817.0,682.7 819.7,673.2 822.5,677.4 825.2,674.4 827.9,676.0 830.6,670.4 833.4,668.0 836.1,673.8 838.8,676.9 841.6,677.5 844.3,674.1 847.0,678.5 849.8,679.2 852.5,673.8 855.2,672.9 857.9,675.6 860.7,674.3 863.4,679.9 866.1,673.4 868.9,678.8 871.6,676.1 874.3,679.7 877.0,682.5 879.8,679.4 882.5,671.0 885.2,670.6 888.0,678.6 890.7,676.3 893.4,672.9 896.1,665.6 898.9,677.6 901.6,680.7 904.3,680.1 907.1,679.7 909.8,680.0 912.5,679.3 915.2,665.4 918.0,683.1 920.7,682.1 923.4,681.9 926.2,683.1 928.9,680.2 931.6,683.1 934.4,683.1 937.1,683.1 939.8,683.1 942.5,683.1 945.3,683.1 948.0,683.1 950.7,680.0 953.5,683.1 956.2,683.1 958.9,682.4 961.6,682.2 964.4,683.1 967.1,683.1 969.8,683.1 972.6,683.1 975.3,683.1 978.0,683.1 980.7,683.1 983.5,683.1 986.2,683.1 988.9,683.1 991.7,683.1 994.4,683.1 997.1,683.1 999.8,683.1 1002.6,680.3 1005.3,683.1 1008.0,683.1 1010.8,683.1 1013.5,683.1 1016.2,683.1 1019.0,683.1 1021.7,683.1 1024.4,683.1 1027.1,683.1 1029.9,683.1 1032.6,666.7 1035.3,680.4 1038.1,679.7 1040.8,674.3 1043.5,673.2 1046.2,669.3 1049.0,673.7 1051.7,676.8 1054.4,682.8 1057.2,673.4 1059.9,674.6 1062.6,678.0 1065.3,673.8 1068.1,677.7 1070.8,676.2 1073.5,681.7 1076.3,675.7 1079.0,671.5 1081.7,677.4 1084.4,683.1 1087.2,680.0 1089.9,676.1 1092.6,679.8 1095.4,680.1 1098.1,682.0 1100.8,678.0 1103.5,675.0 1106.3,681.8 1109.0,673.3 1111.7,676.8 1114.5,681.6 1117.2,666.0 1119.9,674.9 1122.7,669.5 1125.4,674.1 1128.1,677.4 1130.8,675.7 1133.6,680.7 1136.3,673.3 1139.0,678.2 1141.8,675.3 1144.5,674.2 1147.2,675.1 1149.9,665.5 1152.7,673.4 1155.4,675.3 1158.1,680.3 1160.9,681.6 1163.6,673.3 1166.3,680.6 1169.0,674.3 1171.8,674.8 1174.5,680.7 1177.2,677.9 1180.0,682.4 1182.7,674.7 1185.4,679.1 1188.1,670.4 1190.9,680.8 1193.6,679.4 1196.3,678.8 1199.1,675.3 1201.8,680.2 1204.5,675.8 1207.3,682.7 1210.0,673.7 1212.7,679.0 1215.4,674.8 1218.2,679.6 1220.9,679.5 1223.6,679.8 1226.4,679.3 1229.1,679.6 1231.8,676.7 1234.5,673.1 1237.3,680.0 1240.0,675.0 1242.7,680.0 1245.5,674.5 1248.2,677.1 1250.9,674.9 1253.6,674.9 1256.4,673.8 1259.1,675.4 1261.8,668.9 1264.6,675.8 1267.3,675.9 1270.0,679.4 1272.7,682.2 1275.5,674.6 1278.2,676.3 1280.9,675.7 1283.7,673.3 1286.4,674.8 1289.1,680.4 1291.9,677.5 1294.6,679.0 1297.3,679.1 1300.0,679.8 1302.8,677.1 1305.5,678.0 1308.2,677.1 1311.0,681.5 1313.7,681.8 1316.4,683.1 1319.1,683.1 1321.9,683.1 1324.6,683.1" fill="none" stroke="#19b8ce" stroke-width="2.2" stroke-linejoin="round"/><polygon points="148.4,683.1 148.4,683.1 151.1,683.1 153.9,683.1 156.6,683.1 159.3,683.1 162.0,683.1 164.8,683.1 167.5,683.1 170.2,683.1 173.0,683.1 175.7,683.1 178.4,683.1 181.1,683.1 183.9,683.1 186.6,683.1 189.3,683.1 192.1,683.1 194.8,683.1 197.5,683.1 200.3,683.1 203.0,683.1 205.7,683.1 208.4,683.1 211.2,683.1 213.9,683.1 216.6,683.1 219.4,683.1 222.1,683.1 224.8,683.1 227.5,683.1 230.3,683.1 233.0,683.1 235.7,683.1 238.5,683.1 241.2,683.1 243.9,683.1 246.6,683.1 249.4,683.1 252.1,683.1 254.8,679.7 257.6,683.1 260.3,683.1 263.0,683.1 265.7,683.1 268.5,683.1 271.2,683.1 273.9,683.1 276.7,683.1 279.4,683.1 282.1,683.1 284.9,683.1 287.6,683.1 290.3,683.1 293.0,683.1 295.8,683.1 298.5,683.1 301.2,683.1 304.0,683.1 306.7,683.1 309.4,683.1 312.1,683.1 314.9,683.1 317.6,683.1 320.3,683.1 323.1,683.1 325.8,683.1 328.5,683.1 331.2,683.1 334.0,681.9 336.7,683.1 339.4,683.1 342.2,683.1 344.9,683.1 347.6,679.7 350.3,683.1 353.1,683.1 355.8,683.1 358.5,683.1 361.3,683.1 364.0,683.1 366.7,683.1 369.4,683.1 372.2,683.1 374.9,683.1 377.6,683.1 380.4,683.1 383.1,683.1 385.8,683.1 388.6,683.1 391.3,683.1 394.0,683.1 396.7,683.1 399.5,683.1 402.2,683.1 404.9,683.1 407.7,683.1 410.4,679.7 413.1,683.1 415.8,683.1 418.6,683.1 421.3,683.1 424.0,683.1 426.8,680.8 429.5,683.1 432.2,679.3 434.9,683.1 437.7,683.1 440.4,679.6 443.1,683.1 445.9,683.1 448.6,683.1 451.3,683.1 454.0,683.1 456.8,683.1 459.5,683.1 462.2,683.1 465.0,683.1 467.7,683.1 470.4,683.1 473.2,679.4 475.9,683.1 478.6,683.1 481.3,683.1 484.1,683.1 486.8,683.1 489.5,683.1 492.3,680.6 495.0,683.1 497.7,683.1 500.4,683.1 503.2,683.1 505.9,683.1 508.6,683.1 511.4,683.1 514.1,683.1 516.8,683.1 519.5,683.1 522.3,683.1 525.0,683.1 527.7,683.1 530.5,683.1 533.2,683.1 535.9,683.1 538.6,683.1 541.4,683.1 544.1,683.1 546.8,683.1 549.6,683.1 552.3,683.1 555.0,683.1 557.8,683.1 560.5,683.1 563.2,683.1 565.9,683.1 568.7,683.1 571.4,683.1 574.1,683.1 576.9,683.1 579.6,683.1 582.3,683.1 585.0,683.1 587.8,683.1 590.5,683.1 593.2,683.1 596.0,683.1 598.7,683.1 601.4,683.1 604.1,683.1 606.9,683.1 609.6,683.1 612.3,683.1 615.1,683.1 617.8,683.1 620.5,683.1 623.2,683.1 626.0,683.1 628.7,683.1 631.4,683.1 634.2,683.1 636.9,683.1 639.6,683.1 642.3,683.1 645.1,683.1 647.8,683.1 650.5,683.1 653.3,683.1 656.0,683.1 658.7,683.1 661.5,683.1 664.2,683.1 666.9,683.1 669.6,683.1 672.4,683.1 675.1,683.1 677.8,683.1 680.6,683.1 683.3,683.1 686.0,683.1 688.7,678.8 691.5,683.1 694.2,683.1 696.9,683.1 699.7,683.1 702.4,683.1 705.1,683.1 707.8,683.1 710.6,683.1 713.3,681.0 716.0,683.1 718.8,683.1 721.5,683.1 724.2,683.1 726.9,683.1 729.7,683.1 732.4,683.1 735.1,683.1 737.9,683.1 740.6,683.1 743.3,683.1 746.1,683.1 748.8,683.1 751.5,683.1 754.2,683.1 757.0,683.1 759.7,683.1 762.4,683.1 765.2,683.1 767.9,683.1 770.6,683.1 773.3,683.1 776.1,683.1 778.8,683.1 781.5,683.1 784.3,683.1 787.0,679.7 789.7,683.1 792.4,683.1 795.2,683.1 797.9,680.4 800.6,683.1 803.4,683.1 806.1,683.1 808.8,683.1 811.5,683.1 814.3,683.1 817.0,683.1 819.7,683.1 822.5,683.1 825.2,683.1 827.9,683.1 830.6,683.1 833.4,683.1 836.1,681.6 838.8,683.1 841.6,683.1 844.3,683.1 847.0,683.1 849.8,683.1 852.5,683.1 855.2,683.1 857.9,683.1 860.7,681.0 863.4,683.1 866.1,683.1 868.9,683.1 871.6,683.1 874.3,683.1 877.0,683.1 879.8,683.1 882.5,683.1 885.2,683.1 888.0,683.1 890.7,683.1 893.4,683.1 896.1,683.1 898.9,683.1 901.6,683.1 904.3,683.1 907.1,683.1 909.8,683.1 912.5,683.1 915.2,683.1 918.0,683.1 920.7,683.1 923.4,683.1 926.2,683.1 928.9,683.1 931.6,683.1 934.4,683.1 937.1,683.1 939.8,683.1 942.5,683.1 945.3,683.1 948.0,683.1 950.7,683.1 953.5,683.1 956.2,683.1 958.9,683.1 961.6,683.1 964.4,683.1 967.1,683.1 969.8,683.1 972.6,683.1 975.3,683.1 978.0,683.1 980.7,683.1 983.5,683.1 986.2,683.1 988.9,683.1 991.7,683.1 994.4,683.1 997.1,683.1 999.8,683.1 1002.6,683.1 1005.3,683.1 1008.0,683.1 1010.8,683.1 1013.5,683.1 1016.2,683.1 1019.0,683.1 1021.7,683.1 1024.4,683.1 1027.1,683.1 1029.9,683.1 1032.6,683.1 1035.3,683.1 1038.1,683.1 1040.8,683.1 1043.5,683.1 1046.2,683.1 1049.0,683.1 1051.7,683.1 1054.4,683.1 1057.2,683.1 1059.9,683.1 1062.6,683.1 1065.3,683.1 1068.1,683.1 1070.8,683.1 1073.5,683.1 1076.3,683.1 1079.0,683.1 1081.7,683.1 1084.4,683.1 1087.2,683.1 1089.9,683.1 1092.6,683.1 1095.4,683.1 1098.1,683.1 1100.8,683.1 1103.5,680.2 1106.3,680.1 1109.0,683.1 1111.7,683.1 1114.5,683.1 1117.2,683.1 1119.9,683.1 1122.7,683.1 1125.4,683.1 1128.1,683.1 1130.8,683.1 1133.6,683.1 1136.3,683.1 1139.0,683.1 1141.8,683.1 1144.5,683.1 1147.2,683.1 1149.9,681.6 1152.7,681.8 1155.4,683.1 1158.1,683.1 1160.9,683.1 1163.6,683.1 1166.3,683.1 1169.0,681.6 1171.8,683.1 1174.5,683.1 1177.2,683.1 1180.0,683.1 1182.7,683.1 1185.4,683.1 1188.1,683.1 1190.9,683.1 1193.6,683.1 1196.3,683.1 1199.1,683.1 1201.8,683.1 1204.5,683.1 1207.3,683.1 1210.0,683.1 1212.7,683.1 1215.4,683.1 1218.2,683.1 1220.9,683.1 1223.6,683.1 1226.4,683.1 1229.1,683.1 1231.8,683.1 1234.5,683.1 1237.3,683.1 1240.0,683.1 1242.7,680.6 1245.5,683.1 1248.2,683.1 1250.9,683.1 1253.6,683.1 1256.4,683.1 1259.1,683.1 1261.8,683.1 1264.6,683.1 1267.3,683.1 1270.0,683.1 1272.7,683.1 1275.5,683.1 1278.2,683.1 1280.9,683.1 1283.7,683.1 1286.4,683.1 1289.1,680.5 1291.9,683.1 1294.6,683.1 1297.3,683.1 1300.0,683.1 1302.8,683.1 1305.5,683.1 1308.2,683.1 1311.0,683.1 1313.7,683.1 1316.4,683.1 1319.1,683.1 1321.9,683.1 1324.6,683.1 1324.6,683.1" fill="#4285f4" fill-opacity="0.4"/><polyline points="148.4,683.1 151.1,683.1 153.9,683.1 156.6,683.1 159.3,683.1 162.0,683.1 164.8,683.1 167.5,683.1 170.2,683.1 173.0,683.1 175.7,683.1 178.4,683.1 181.1,683.1 183.9,683.1 186.6,683.1 189.3,683.1 192.1,683.1 194.8,683.1 197.5,683.1 200.3,683.1 203.0,683.1 205.7,683.1 208.4,683.1 211.2,683.1 213.9,683.1 216.6,683.1 219.4,683.1 222.1,683.1 224.8,683.1 227.5,683.1 230.3,683.1 233.0,683.1 235.7,683.1 238.5,683.1 241.2,683.1 243.9,683.1 246.6,683.1 249.4,683.1 252.1,683.1 254.8,679.7 257.6,683.1 260.3,683.1 263.0,683.1 265.7,683.1 268.5,683.1 271.2,683.1 273.9,683.1 276.7,683.1 279.4,683.1 282.1,683.1 284.9,683.1 287.6,683.1 290.3,683.1 293.0,683.1 295.8,683.1 298.5,683.1 301.2,683.1 304.0,683.1 306.7,683.1 309.4,683.1 312.1,683.1 314.9,683.1 317.6,683.1 320.3,683.1 323.1,683.1 325.8,683.1 328.5,683.1 331.2,683.1 334.0,681.9 336.7,683.1 339.4,683.1 342.2,683.1 344.9,683.1 347.6,679.7 350.3,683.1 353.1,683.1 355.8,683.1 358.5,683.1 361.3,683.1 364.0,683.1 366.7,683.1 369.4,683.1 372.2,683.1 374.9,683.1 377.6,683.1 380.4,683.1 383.1,683.1 385.8,683.1 388.6,683.1 391.3,683.1 394.0,683.1 396.7,683.1 399.5,683.1 402.2,683.1 404.9,683.1 407.7,683.1 410.4,679.7 413.1,683.1 415.8,683.1 418.6,683.1 421.3,683.1 424.0,683.1 426.8,680.8 429.5,683.1 432.2,679.3 434.9,683.1 437.7,683.1 440.4,679.6 443.1,683.1 445.9,683.1 448.6,683.1 451.3,683.1 454.0,683.1 456.8,683.1 459.5,683.1 462.2,683.1 465.0,683.1 467.7,683.1 470.4,683.1 473.2,679.4 475.9,683.1 478.6,683.1 481.3,683.1 484.1,683.1 486.8,683.1 489.5,683.1 492.3,680.6 495.0,683.1 497.7,683.1 500.4,683.1 503.2,683.1 505.9,683.1 508.6,683.1 511.4,683.1 514.1,683.1 516.8,683.1 519.5,683.1 522.3,683.1 525.0,683.1 527.7,683.1 530.5,683.1 533.2,683.1 535.9,683.1 538.6,683.1 541.4,683.1 544.1,683.1 546.8,683.1 549.6,683.1 552.3,683.1 555.0,683.1 557.8,683.1 560.5,683.1 563.2,683.1 565.9,683.1 568.7,683.1 571.4,683.1 574.1,683.1 576.9,683.1 579.6,683.1 582.3,683.1 585.0,683.1 587.8,683.1 590.5,683.1 593.2,683.1 596.0,683.1 598.7,683.1 601.4,683.1 604.1,683.1 606.9,683.1 609.6,683.1 612.3,683.1 615.1,683.1 617.8,683.1 620.5,683.1 623.2,683.1 626.0,683.1 628.7,683.1 631.4,683.1 634.2,683.1 636.9,683.1 639.6,683.1 642.3,683.1 645.1,683.1 647.8,683.1 650.5,683.1 653.3,683.1 656.0,683.1 658.7,683.1 661.5,683.1 664.2,683.1 666.9,683.1 669.6,683.1 672.4,683.1 675.1,683.1 677.8,683.1 680.6,683.1 683.3,683.1 686.0,683.1 688.7,678.8 691.5,683.1 694.2,683.1 696.9,683.1 699.7,683.1 702.4,683.1 705.1,683.1 707.8,683.1 710.6,683.1 713.3,681.0 716.0,683.1 718.8,683.1 721.5,683.1 724.2,683.1 726.9,683.1 729.7,683.1 732.4,683.1 735.1,683.1 737.9,683.1 740.6,683.1 743.3,683.1 746.1,683.1 748.8,683.1 751.5,683.1 754.2,683.1 757.0,683.1 759.7,683.1 762.4,683.1 765.2,683.1 767.9,683.1 770.6,683.1 773.3,683.1 776.1,683.1 778.8,683.1 781.5,683.1 784.3,683.1 787.0,679.7 789.7,683.1 792.4,683.1 795.2,683.1 797.9,680.4 800.6,683.1 803.4,683.1 806.1,683.1 808.8,683.1 811.5,683.1 814.3,683.1 817.0,683.1 819.7,683.1 822.5,683.1 825.2,683.1 827.9,683.1 830.6,683.1 833.4,683.1 836.1,681.6 838.8,683.1 841.6,683.1 844.3,683.1 847.0,683.1 849.8,683.1 852.5,683.1 855.2,683.1 857.9,683.1 860.7,681.0 863.4,683.1 866.1,683.1 868.9,683.1 871.6,683.1 874.3,683.1 877.0,683.1 879.8,683.1 882.5,683.1 885.2,683.1 888.0,683.1 890.7,683.1 893.4,683.1 896.1,683.1 898.9,683.1 901.6,683.1 904.3,683.1 907.1,683.1 909.8,683.1 912.5,683.1 915.2,683.1 918.0,683.1 920.7,683.1 923.4,683.1 926.2,683.1 928.9,683.1 931.6,683.1 934.4,683.1 937.1,683.1 939.8,683.1 942.5,683.1 945.3,683.1 948.0,683.1 950.7,683.1 953.5,683.1 956.2,683.1 958.9,683.1 961.6,683.1 964.4,683.1 967.1,683.1 969.8,683.1 972.6,683.1 975.3,683.1 978.0,683.1 980.7,683.1 983.5,683.1 986.2,683.1 988.9,683.1 991.7,683.1 994.4,683.1 997.1,683.1 999.8,683.1 1002.6,683.1 1005.3,683.1 1008.0,683.1 1010.8,683.1 1013.5,683.1 1016.2,683.1 1019.0,683.1 1021.7,683.1 1024.4,683.1 1027.1,683.1 1029.9,683.1 1032.6,683.1 1035.3,683.1 1038.1,683.1 1040.8,683.1 1043.5,683.1 1046.2,683.1 1049.0,683.1 1051.7,683.1 1054.4,683.1 1057.2,683.1 1059.9,683.1 1062.6,683.1 1065.3,683.1 1068.1,683.1 1070.8,683.1 1073.5,683.1 1076.3,683.1 1079.0,683.1 1081.7,683.1 1084.4,683.1 1087.2,683.1 1089.9,683.1 1092.6,683.1 1095.4,683.1 1098.1,683.1 1100.8,683.1 1103.5,680.2 1106.3,680.1 1109.0,683.1 1111.7,683.1 1114.5,683.1 1117.2,683.1 1119.9,683.1 1122.7,683.1 1125.4,683.1 1128.1,683.1 1130.8,683.1 1133.6,683.1 1136.3,683.1 1139.0,683.1 1141.8,683.1 1144.5,683.1 1147.2,683.1 1149.9,681.6 1152.7,681.8 1155.4,683.1 1158.1,683.1 1160.9,683.1 1163.6,683.1 1166.3,683.1 1169.0,681.6 1171.8,683.1 1174.5,683.1 1177.2,683.1 1180.0,683.1 1182.7,683.1 1185.4,683.1 1188.1,683.1 1190.9,683.1 1193.6,683.1 1196.3,683.1 1199.1,683.1 1201.8,683.1 1204.5,683.1 1207.3,683.1 1210.0,683.1 1212.7,683.1 1215.4,683.1 1218.2,683.1 1220.9,683.1 1223.6,683.1 1226.4,683.1 1229.1,683.1 1231.8,683.1 1234.5,683.1 1237.3,683.1 1240.0,683.1 1242.7,680.6 1245.5,683.1 1248.2,683.1 1250.9,683.1 1253.6,683.1 1256.4,683.1 1259.1,683.1 1261.8,683.1 1264.6,683.1 1267.3,683.1 1270.0,683.1 1272.7,683.1 1275.5,683.1 1278.2,683.1 1280.9,683.1 1283.7,683.1 1286.4,683.1 1289.1,680.5 1291.9,683.1 1294.6,683.1 1297.3,683.1 1300.0,683.1 1302.8,683.1 1305.5,683.1 1308.2,683.1 1311.0,683.1 1313.7,683.1 1316.4,683.1 1319.1,683.1 1321.9,683.1 1324.6,683.1" fill="none" stroke="#3b7ded" stroke-width="2.2" stroke-linejoin="round"/></svg>
<div class="abs tx" style="left:66px;width:60px;text-align:right;top:448.7px;font-size:14.5px;line-height:17px;color:#3c4043">0.2000</div>
<div class="abs tx" style="left:66px;width:60px;text-align:right;top:505.3px;font-size:14.5px;line-height:17px;color:#3c4043">0.1500</div>
<div class="abs tx" style="left:66px;width:60px;text-align:right;top:562.1px;font-size:14.5px;line-height:17px;color:#3c4043">0.1000</div>
<div class="abs tx" style="left:66px;width:60px;text-align:right;top:619.1px;font-size:14.5px;line-height:17px;color:#3c4043">0.0500</div>
<div class="abs tx" style="left:66px;width:60px;text-align:right;top:675.9px;font-size:14.5px;line-height:17px;color:#3c4043">0.0000</div>
<div class="abs tx" style="left:108px;width:80px;text-align:center;top:694.2px;font-size:14px;line-height:17px;color:#3c4043">Jul 8</div>
<div class="abs tx" style="left:206px;width:80px;text-align:center;top:694.2px;font-size:14px;line-height:17px;color:#3c4043">06:00</div>
<div class="abs tx" style="left:304.5px;width:80px;text-align:center;top:694.2px;font-size:14px;line-height:17px;color:#3c4043">12:00</div>
<div class="abs tx" style="left:403px;width:80px;text-align:center;top:694.2px;font-size:14px;line-height:17px;color:#3c4043">18:00</div>
<div class="abs tx" style="left:501px;width:80px;text-align:center;top:694.2px;font-size:14px;line-height:17px;color:#3c4043">Jul 9</div>
<div class="abs tx" style="left:599px;width:80px;text-align:center;top:694.2px;font-size:14px;line-height:17px;color:#3c4043">06:00</div>
<div class="abs tx" style="left:698px;width:80px;text-align:center;top:694.2px;font-size:14px;line-height:17px;color:#3c4043">12:00</div>
<div class="abs tx" style="left:796px;width:80px;text-align:center;top:694.2px;font-size:14px;line-height:17px;color:#3c4043">18:00</div>
<div class="abs tx" style="left:894px;width:80px;text-align:center;top:694.2px;font-size:14px;line-height:17px;color:#3c4043">Jul 10</div>
<div class="abs tx" style="left:992px;width:80px;text-align:center;top:694.2px;font-size:14px;line-height:17px;color:#3c4043">06:00</div>
<div class="abs tx" style="left:1091px;width:80px;text-align:center;top:694.2px;font-size:14px;line-height:17px;color:#3c4043">12:00</div>
<div class="abs tx" style="left:1189px;width:80px;text-align:center;top:694.2px;font-size:14px;line-height:17px;color:#3c4043">18:00</div>
<div class="abs tx" style="left:1275.5px;width:80px;text-align:center;top:694.2px;font-size:14px;line-height:17px;color:#3c4043">Jul 11</div>
<div class="abs tx" style="left:636px;width:200px;text-align:center;top:716px;font-size:14.65px;line-height:17px;color:#3c4043">Time bucket start Time</div>
<div class="abs tx" style="left:2.9px;width:100px;text-align:center;top:551px;font-size:14px;line-height:17px;color:#3c4043;transform:rotate(-90deg)">Concurrency</div>
<div class="abs" style="left:569.1px;top:766px;width:18.5px;height:6px;background:linear-gradient(#a6c8fa,#a6c8fa99);border-radius:0 0 2px 2px"></div><div class="abs" style="left:568.6px;top:764.2px;width:19.5px;height:2.6px;background:#4285f4;border-radius:1.3px"></div>
<div class="abs tx" style="left:594px;top:758.7px;font-size:14.7px;line-height:17.6px;color:#3c4043;font-weight:normal;letter-spacing:0.45px">alerts</div>
<div class="abs" style="left:655.5px;top:766px;width:18.5px;height:6px;background:linear-gradient(#a0e1ea,#a0e1ea99);border-radius:0 0 2px 2px"></div><div class="abs" style="left:655px;top:764.2px;width:19.5px;height:2.6px;background:#12b5cb;border-radius:1.3px"></div>
<div class="abs tx" style="left:679.6px;top:758.7px;font-size:14.7px;line-height:17.6px;color:#3c4043;font-weight:normal;letter-spacing:0.45px">api4</div>
<div class="abs" style="left:732.9px;top:766px;width:18.5px;height:6px;background:linear-gradient(#f5b5d9,#f5b5d999);border-radius:0 0 2px 2px"></div><div class="abs" style="left:732.4px;top:764.2px;width:19.5px;height:2.6px;background:#e52592;border-radius:1.3px"></div>
<div class="abs tx" style="left:757px;top:758.7px;font-size:14.7px;line-height:17.6px;color:#3c4043;font-weight:normal;letter-spacing:0.45px">suggest</div>
<div class="abs" style="left:29px;top:814px;width:1320px;height:33px;background:#262d33;border-radius:4px"></div>
<div class="abs" style="left:136px;top:814px;width:97px;height:33px;background:#4c5258"></div>
<svg class="abs" style="left:48.0px;top:828.0px" width="10" height="5"><path d="M0,0 L10,0 L5.0,5Z" fill="#fff"/></svg>
<div class="abs tx" style="left:68px;top:821.6px;font-size:15px;line-height:18.0px;color:#fff;font-weight:bold;transform:scaleX(0.93);transform-origin:0 50%">Data</div>
<div class="abs tx" style="left:159.5px;top:821.6px;font-size:15px;line-height:18.0px;color:#f2f2f2;font-weight:bold;transform:scaleX(0.9);transform-origin:0 50%">Results</div>
<div class="abs tx" style="left:257px;top:822.1px;font-size:14px;line-height:16.8px;color:#f2f2f2;font-weight:normal;-webkit-text-stroke:0.3px #f2f2f2">SQL</div>
<div class="abs" style="left:339.5px;top:819px;width:125px;height:24px;background:#444b52;border-radius:3px"></div>
<div class="abs tx" style="left:350px;top:821.8px;font-size:14.5px;line-height:17.4px;color:#f2f2f2;font-weight:normal;-webkit-text-stroke:0.3px #f2f2f2;letter-spacing:0.4px">Add calculation</div>
<div class="abs tx" style="left:875.5px;top:821.9px;font-size:14.3px;line-height:17.2px;color:#f2f2f2;font-weight:normal;-webkit-text-stroke:0.3px #f2f2f2">Row Limit</div>
<div class="abs" style="left:943px;top:819.5px;width:54px;height:23.5px;background:#fff;border-radius:2px"></div>
<div class="abs tx" style="left:948px;top:822.1px;font-size:14px;line-height:16.8px;color:#202124;font-weight:normal;">1000</div>
<div class="abs tx" style="left:1009.5px;top:821.7px;font-size:14.6px;line-height:17.5px;color:#f2f2f2;font-weight:normal;-webkit-text-stroke:0.3px #f2f2f2">Column Limit</div>
<div class="abs" style="left:1099px;top:819.5px;width:54px;height:23.5px;background:#fff;border-radius:2px"></div>
<div class="abs tx" style="left:1104px;top:822.1px;font-size:14px;line-height:16.8px;color:#202124;font-weight:normal;">50</div>
<div class="abs" style="left:1167px;top:823px;width:13px;height:13px;background:#fff;border-radius:2px"></div>
<div class="abs tx" style="left:1185.5px;top:820.6px;font-size:14.8px;line-height:17.8px;color:#f2f2f2;font-weight:normal;-webkit-text-stroke:0.3px #f2f2f2">Totals</div>
<div class="abs" style="left:1241px;top:823px;width:13px;height:13px;background:#fff;border-radius:2px"></div>
<div class="abs tx" style="left:1259.5px;top:820.7px;font-size:14.6px;line-height:17.5px;color:#f2f2f2;font-weight:normal;-webkit-text-stroke:0.3px #f2f2f2">Row Totals</div>
<div class="abs" style="left:29px;top:860px;width:1303.5px;height:26px;background:#cdd9e5"></div>
<div class="abs" style="left:29px;top:886px;width:447.5px;height:26.5px;background:#e8eef5"></div>
<div class="abs" style="left:476.5px;top:886px;width:856px;height:26.5px;background:#f0e4d8"></div>
<div class="abs" style="left:29px;top:940.3px;width:447.5px;height:25.3px;background:#f8f9fb"></div>
<div class="abs" style="left:476.5px;top:940.3px;width:856px;height:25.3px;background:#f8f5f1"></div>
<div class="abs" style="left:29px;top:990.9px;width:447.5px;height:25.3px;background:#f8f9fb"></div>
<div class="abs" style="left:476.5px;top:990.9px;width:856px;height:25.3px;background:#f8f5f1"></div>
<div class="abs" style="left:29px;top:1041.4px;width:447.5px;height:25.3px;background:#f8f9fb"></div>
<div class="abs" style="left:476.5px;top:1041.4px;width:856px;height:25.3px;background:#f8f5f1"></div>
<div class="abs" style="left:29px;top:1092.0px;width:447.5px;height:25.3px;background:#f8f9fb"></div>
<div class="abs" style="left:476.5px;top:1092.0px;width:856px;height:25.3px;background:#f8f5f1"></div>
<div class="abs" style="left:29px;top:1142.5px;width:447.5px;height:25.3px;background:#f8f9fb"></div>
<div class="abs" style="left:476.5px;top:1142.5px;width:856px;height:25.3px;background:#f8f5f1"></div>
<div class="abs" style="left:29px;top:1193.1px;width:447.5px;height:25.3px;background:#f8f9fb"></div>
<div class="abs" style="left:476.5px;top:1193.1px;width:856px;height:25.3px;background:#f8f5f1"></div>
<div class="abs" style="left:59px;top:912.5px;width:1px;height:325px;background:#e3e6ea"></div>
<div class="abs" style="left:59px;top:886px;width:1px;height:26.5px;background:#f7f9fb"></div>
<div class="abs" style="left:476px;top:912.5px;width:1.2px;height:325px;background:#e8e8e8"></div>
<div class="abs" style="left:476px;top:860px;width:1.2px;height:52.5px;background:#f4f6f8"></div>
<div class="abs" style="left:762px;top:912.5px;width:1.2px;height:325px;background:#e8e8e8"></div>
<div class="abs" style="left:762px;top:860px;width:1.2px;height:52.5px;background:#f4f6f8"></div>
<div class="abs" style="left:1047px;top:912.5px;width:1.2px;height:325px;background:#e8e8e8"></div>
<div class="abs" style="left:1047px;top:860px;width:1.2px;height:52.5px;background:#f4f6f8"></div>
<div class="abs" style="left:1332.5px;top:860px;width:16px;height:377px;background:#f7f7f7;border-left:1px solid #ececec"></div>
<div class="abs" style="left:1337px;top:861.5px;width:8.5px;height:19px;background:#c2c2c2;border-radius:4px"></div>
<div class="abs tx" style="left:34px;top:865.2px;font-size:13px;line-height:15.6px;color:#3c4043;font-weight:normal;">Query Intervals <span class="m">Source</span></div>
<svg class="abs" style="left:172px;top:866px" width="8" height="14"><path d="M1.5,1 L6.5,7 L1.5,13" fill="none" stroke="#3c4043" stroke-width="1.3"/></svg>
<div class="abs tx" style="left:64.5px;top:891.7px;font-size:13px;line-height:15.6px;color:#3c4043;font-weight:normal;">Concurrency <span class="m" style="word-spacing:2.2px">Time bucket start Time</span></div>
<svg class="abs" style="left:284px;top:892.5px" width="10" height="14"><path d="M5,1 V12 M1,8 L5,12.2 L9,8" fill="none" stroke="#3c4043" stroke-width="1.4"/></svg>
<svg class="abs" style="left:453.3px;top:862.0px" width="20" height="20" viewBox="0 0 24 24"><path d="M12.00,3.45 L12.34,3.47 L12.67,3.55 L12.98,3.72 L13.25,4.08 L13.46,4.64 L13.63,5.21 L13.81,5.59 L14.01,5.80 L14.24,5.94 L14.47,6.04 L14.71,6.13 L14.96,6.19 L15.26,6.19 L15.65,6.05 L16.17,5.76 L16.71,5.51 L17.16,5.45 L17.51,5.55 L17.79,5.73 L18.05,5.95 L18.27,6.21 L18.45,6.49 L18.55,6.84 L18.49,7.29 L18.24,7.83 L17.95,8.35 L17.81,8.74 L17.81,9.04 L17.87,9.29 L17.96,9.53 L18.06,9.76 L18.20,9.99 L18.41,10.19 L18.79,10.37 L19.36,10.54 L19.92,10.75 L20.28,11.02 L20.45,11.33 L20.53,11.66 L20.55,12.00 L20.53,12.34 L20.45,12.67 L20.28,12.98 L19.92,13.25 L19.36,13.46 L18.79,13.63 L18.41,13.81 L18.20,14.01 L18.06,14.24 L17.96,14.47 L17.87,14.71 L17.81,14.96 L17.81,15.26 L17.95,15.65 L18.24,16.17 L18.49,16.71 L18.55,17.16 L18.45,17.51 L18.27,17.79 L18.05,18.05 L17.79,18.27 L17.51,18.45 L17.16,18.55 L16.71,18.49 L16.17,18.24 L15.65,17.95 L15.26,17.81 L14.96,17.81 L14.71,17.87 L14.47,17.96 L14.24,18.06 L14.01,18.20 L13.81,18.41 L13.63,18.79 L13.46,19.36 L13.25,19.92 L12.98,20.28 L12.67,20.45 L12.34,20.53 L12.00,20.55 L11.66,20.53 L11.33,20.45 L11.02,20.28 L10.75,19.92 L10.54,19.36 L10.37,18.79 L10.19,18.41 L9.99,18.20 L9.76,18.06 L9.53,17.96 L9.29,17.87 L9.04,17.81 L8.74,17.81 L8.35,17.95 L7.83,18.24 L7.29,18.49 L6.84,18.55 L6.49,18.45 L6.21,18.27 L5.95,18.05 L5.73,17.79 L5.55,17.51 L5.45,17.16 L5.51,16.71 L5.76,16.17 L6.05,15.65 L6.19,15.26 L6.19,14.96 L6.13,14.71 L6.04,14.47 L5.94,14.24 L5.80,14.01 L5.59,13.81 L5.21,13.63 L4.64,13.46 L4.08,13.25 L3.72,12.98 L3.55,12.67 L3.47,12.34 L3.45,12.00 L3.47,11.66 L3.55,11.33 L3.72,11.02 L4.08,10.75 L4.64,10.54 L5.21,10.37 L5.59,10.19 L5.80,9.99 L5.94,9.76 L6.04,9.53 L6.13,9.29 L6.19,9.04 L6.19,8.74 L6.05,8.35 L5.76,7.83 L5.51,7.29 L5.45,6.84 L5.55,6.49 L5.73,6.21 L5.95,5.95 L6.21,5.73 L6.49,5.55 L6.84,5.45 L7.29,5.51 L7.83,5.76 L8.35,6.05 L8.74,6.19 L9.04,6.19 L9.29,6.13 L9.53,6.04 L9.76,5.94 L9.99,5.80 L10.19,5.59 L10.37,5.21 L10.54,4.64 L10.75,4.08 L11.02,3.72 L11.33,3.55 L11.66,3.47Z" fill="none" stroke="#4a4f55" stroke-width="1.68" stroke-linejoin="round"/><circle cx="12" cy="12" r="2.9" fill="none" stroke="#4a4f55" stroke-width="1.68"/></svg>
<svg class="abs" style="left:453.3px;top:889.5px" width="20" height="20" viewBox="0 0 24 24"><path d="M12.00,3.45 L12.34,3.47 L12.67,3.55 L12.98,3.72 L13.25,4.08 L13.46,4.64 L13.63,5.21 L13.81,5.59 L14.01,5.80 L14.24,5.94 L14.47,6.04 L14.71,6.13 L14.96,6.19 L15.26,6.19 L15.65,6.05 L16.17,5.76 L16.71,5.51 L17.16,5.45 L17.51,5.55 L17.79,5.73 L18.05,5.95 L18.27,6.21 L18.45,6.49 L18.55,6.84 L18.49,7.29 L18.24,7.83 L17.95,8.35 L17.81,8.74 L17.81,9.04 L17.87,9.29 L17.96,9.53 L18.06,9.76 L18.20,9.99 L18.41,10.19 L18.79,10.37 L19.36,10.54 L19.92,10.75 L20.28,11.02 L20.45,11.33 L20.53,11.66 L20.55,12.00 L20.53,12.34 L20.45,12.67 L20.28,12.98 L19.92,13.25 L19.36,13.46 L18.79,13.63 L18.41,13.81 L18.20,14.01 L18.06,14.24 L17.96,14.47 L17.87,14.71 L17.81,14.96 L17.81,15.26 L17.95,15.65 L18.24,16.17 L18.49,16.71 L18.55,17.16 L18.45,17.51 L18.27,17.79 L18.05,18.05 L17.79,18.27 L17.51,18.45 L17.16,18.55 L16.71,18.49 L16.17,18.24 L15.65,17.95 L15.26,17.81 L14.96,17.81 L14.71,17.87 L14.47,17.96 L14.24,18.06 L14.01,18.20 L13.81,18.41 L13.63,18.79 L13.46,19.36 L13.25,19.92 L12.98,20.28 L12.67,20.45 L12.34,20.53 L12.00,20.55 L11.66,20.53 L11.33,20.45 L11.02,20.28 L10.75,19.92 L10.54,19.36 L10.37,18.79 L10.19,18.41 L9.99,18.20 L9.76,18.06 L9.53,17.96 L9.29,17.87 L9.04,17.81 L8.74,17.81 L8.35,17.95 L7.83,18.24 L7.29,18.49 L6.84,18.55 L6.49,18.45 L6.21,18.27 L5.95,18.05 L5.73,17.79 L5.55,17.51 L5.45,17.16 L5.51,16.71 L5.76,16.17 L6.05,15.65 L6.19,15.26 L6.19,14.96 L6.13,14.71 L6.04,14.47 L5.94,14.24 L5.80,14.01 L5.59,13.81 L5.21,13.63 L4.64,13.46 L4.08,13.25 L3.72,12.98 L3.55,12.67 L3.47,12.34 L3.45,12.00 L3.47,11.66 L3.55,11.33 L3.72,11.02 L4.08,10.75 L4.64,10.54 L5.21,10.37 L5.59,10.19 L5.80,9.99 L5.94,9.76 L6.04,9.53 L6.13,9.29 L6.19,9.04 L6.19,8.74 L6.05,8.35 L5.76,7.83 L5.51,7.29 L5.45,6.84 L5.55,6.49 L5.73,6.21 L5.95,5.95 L6.21,5.73 L6.49,5.55 L6.84,5.45 L7.29,5.51 L7.83,5.76 L8.35,6.05 L8.74,6.19 L9.04,6.19 L9.29,6.13 L9.53,6.04 L9.76,5.94 L9.99,5.80 L10.19,5.59 L10.37,5.21 L10.54,4.64 L10.75,4.08 L11.02,3.72 L11.33,3.55 L11.66,3.47Z" fill="none" stroke="#4a4f55" stroke-width="1.68" stroke-linejoin="round"/><circle cx="12" cy="12" r="2.9" fill="none" stroke="#4a4f55" stroke-width="1.68"/></svg>
<svg class="abs" style="left:738.8px;top:862.0px" width="20" height="20" viewBox="0 0 24 24"><path d="M12.00,3.45 L12.34,3.47 L12.67,3.55 L12.98,3.72 L13.25,4.08 L13.46,4.64 L13.63,5.21 L13.81,5.59 L14.01,5.80 L14.24,5.94 L14.47,6.04 L14.71,6.13 L14.96,6.19 L15.26,6.19 L15.65,6.05 L16.17,5.76 L16.71,5.51 L17.16,5.45 L17.51,5.55 L17.79,5.73 L18.05,5.95 L18.27,6.21 L18.45,6.49 L18.55,6.84 L18.49,7.29 L18.24,7.83 L17.95,8.35 L17.81,8.74 L17.81,9.04 L17.87,9.29 L17.96,9.53 L18.06,9.76 L18.20,9.99 L18.41,10.19 L18.79,10.37 L19.36,10.54 L19.92,10.75 L20.28,11.02 L20.45,11.33 L20.53,11.66 L20.55,12.00 L20.53,12.34 L20.45,12.67 L20.28,12.98 L19.92,13.25 L19.36,13.46 L18.79,13.63 L18.41,13.81 L18.20,14.01 L18.06,14.24 L17.96,14.47 L17.87,14.71 L17.81,14.96 L17.81,15.26 L17.95,15.65 L18.24,16.17 L18.49,16.71 L18.55,17.16 L18.45,17.51 L18.27,17.79 L18.05,18.05 L17.79,18.27 L17.51,18.45 L17.16,18.55 L16.71,18.49 L16.17,18.24 L15.65,17.95 L15.26,17.81 L14.96,17.81 L14.71,17.87 L14.47,17.96 L14.24,18.06 L14.01,18.20 L13.81,18.41 L13.63,18.79 L13.46,19.36 L13.25,19.92 L12.98,20.28 L12.67,20.45 L12.34,20.53 L12.00,20.55 L11.66,20.53 L11.33,20.45 L11.02,20.28 L10.75,19.92 L10.54,19.36 L10.37,18.79 L10.19,18.41 L9.99,18.20 L9.76,18.06 L9.53,17.96 L9.29,17.87 L9.04,17.81 L8.74,17.81 L8.35,17.95 L7.83,18.24 L7.29,18.49 L6.84,18.55 L6.49,18.45 L6.21,18.27 L5.95,18.05 L5.73,17.79 L5.55,17.51 L5.45,17.16 L5.51,16.71 L5.76,16.17 L6.05,15.65 L6.19,15.26 L6.19,14.96 L6.13,14.71 L6.04,14.47 L5.94,14.24 L5.80,14.01 L5.59,13.81 L5.21,13.63 L4.64,13.46 L4.08,13.25 L3.72,12.98 L3.55,12.67 L3.47,12.34 L3.45,12.00 L3.47,11.66 L3.55,11.33 L3.72,11.02 L4.08,10.75 L4.64,10.54 L5.21,10.37 L5.59,10.19 L5.80,9.99 L5.94,9.76 L6.04,9.53 L6.13,9.29 L6.19,9.04 L6.19,8.74 L6.05,8.35 L5.76,7.83 L5.51,7.29 L5.45,6.84 L5.55,6.49 L5.73,6.21 L5.95,5.95 L6.21,5.73 L6.49,5.55 L6.84,5.45 L7.29,5.51 L7.83,5.76 L8.35,6.05 L8.74,6.19 L9.04,6.19 L9.29,6.13 L9.53,6.04 L9.76,5.94 L9.99,5.80 L10.19,5.59 L10.37,5.21 L10.54,4.64 L10.75,4.08 L11.02,3.72 L11.33,3.55 L11.66,3.47Z" fill="none" stroke="#4a4f55" stroke-width="1.68" stroke-linejoin="round"/><circle cx="12" cy="12" r="2.9" fill="none" stroke="#4a4f55" stroke-width="1.68"/></svg>
<svg class="abs" style="left:738.8px;top:889.5px" width="20" height="20" viewBox="0 0 24 24"><path d="M12.00,3.45 L12.34,3.47 L12.67,3.55 L12.98,3.72 L13.25,4.08 L13.46,4.64 L13.63,5.21 L13.81,5.59 L14.01,5.80 L14.24,5.94 L14.47,6.04 L14.71,6.13 L14.96,6.19 L15.26,6.19 L15.65,6.05 L16.17,5.76 L16.71,5.51 L17.16,5.45 L17.51,5.55 L17.79,5.73 L18.05,5.95 L18.27,6.21 L18.45,6.49 L18.55,6.84 L18.49,7.29 L18.24,7.83 L17.95,8.35 L17.81,8.74 L17.81,9.04 L17.87,9.29 L17.96,9.53 L18.06,9.76 L18.20,9.99 L18.41,10.19 L18.79,10.37 L19.36,10.54 L19.92,10.75 L20.28,11.02 L20.45,11.33 L20.53,11.66 L20.55,12.00 L20.53,12.34 L20.45,12.67 L20.28,12.98 L19.92,13.25 L19.36,13.46 L18.79,13.63 L18.41,13.81 L18.20,14.01 L18.06,14.24 L17.96,14.47 L17.87,14.71 L17.81,14.96 L17.81,15.26 L17.95,15.65 L18.24,16.17 L18.49,16.71 L18.55,17.16 L18.45,17.51 L18.27,17.79 L18.05,18.05 L17.79,18.27 L17.51,18.45 L17.16,18.55 L16.71,18.49 L16.17,18.24 L15.65,17.95 L15.26,17.81 L14.96,17.81 L14.71,17.87 L14.47,17.96 L14.24,18.06 L14.01,18.20 L13.81,18.41 L13.63,18.79 L13.46,19.36 L13.25,19.92 L12.98,20.28 L12.67,20.45 L12.34,20.53 L12.00,20.55 L11.66,20.53 L11.33,20.45 L11.02,20.28 L10.75,19.92 L10.54,19.36 L10.37,18.79 L10.19,18.41 L9.99,18.20 L9.76,18.06 L9.53,17.96 L9.29,17.87 L9.04,17.81 L8.74,17.81 L8.35,17.95 L7.83,18.24 L7.29,18.49 L6.84,18.55 L6.49,18.45 L6.21,18.27 L5.95,18.05 L5.73,17.79 L5.55,17.51 L5.45,17.16 L5.51,16.71 L5.76,16.17 L6.05,15.65 L6.19,15.26 L6.19,14.96 L6.13,14.71 L6.04,14.47 L5.94,14.24 L5.80,14.01 L5.59,13.81 L5.21,13.63 L4.64,13.46 L4.08,13.25 L3.72,12.98 L3.55,12.67 L3.47,12.34 L3.45,12.00 L3.47,11.66 L3.55,11.33 L3.72,11.02 L4.08,10.75 L4.64,10.54 L5.21,10.37 L5.59,10.19 L5.80,9.99 L5.94,9.76 L6.04,9.53 L6.13,9.29 L6.19,9.04 L6.19,8.74 L6.05,8.35 L5.76,7.83 L5.51,7.29 L5.45,6.84 L5.55,6.49 L5.73,6.21 L5.95,5.95 L6.21,5.73 L6.49,5.55 L6.84,5.45 L7.29,5.51 L7.83,5.76 L8.35,6.05 L8.74,6.19 L9.04,6.19 L9.29,6.13 L9.53,6.04 L9.76,5.94 L9.99,5.80 L10.19,5.59 L10.37,5.21 L10.54,4.64 L10.75,4.08 L11.02,3.72 L11.33,3.55 L11.66,3.47Z" fill="none" stroke="#4a4f55" stroke-width="1.68" stroke-linejoin="round"/><circle cx="12" cy="12" r="2.9" fill="none" stroke="#4a4f55" stroke-width="1.68"/></svg>
<svg class="abs" style="left:1024.3px;top:862.0px" width="20" height="20" viewBox="0 0 24 24"><path d="M12.00,3.45 L12.34,3.47 L12.67,3.55 L12.98,3.72 L13.25,4.08 L13.46,4.64 L13.63,5.21 L13.81,5.59 L14.01,5.80 L14.24,5.94 L14.47,6.04 L14.71,6.13 L14.96,6.19 L15.26,6.19 L15.65,6.05 L16.17,5.76 L16.71,5.51 L17.16,5.45 L17.51,5.55 L17.79,5.73 L18.05,5.95 L18.27,6.21 L18.45,6.49 L18.55,6.84 L18.49,7.29 L18.24,7.83 L17.95,8.35 L17.81,8.74 L17.81,9.04 L17.87,9.29 L17.96,9.53 L18.06,9.76 L18.20,9.99 L18.41,10.19 L18.79,10.37 L19.36,10.54 L19.92,10.75 L20.28,11.02 L20.45,11.33 L20.53,11.66 L20.55,12.00 L20.53,12.34 L20.45,12.67 L20.28,12.98 L19.92,13.25 L19.36,13.46 L18.79,13.63 L18.41,13.81 L18.20,14.01 L18.06,14.24 L17.96,14.47 L17.87,14.71 L17.81,14.96 L17.81,15.26 L17.95,15.65 L18.24,16.17 L18.49,16.71 L18.55,17.16 L18.45,17.51 L18.27,17.79 L18.05,18.05 L17.79,18.27 L17.51,18.45 L17.16,18.55 L16.71,18.49 L16.17,18.24 L15.65,17.95 L15.26,17.81 L14.96,17.81 L14.71,17.87 L14.47,17.96 L14.24,18.06 L14.01,18.20 L13.81,18.41 L13.63,18.79 L13.46,19.36 L13.25,19.92 L12.98,20.28 L12.67,20.45 L12.34,20.53 L12.00,20.55 L11.66,20.53 L11.33,20.45 L11.02,20.28 L10.75,19.92 L10.54,19.36 L10.37,18.79 L10.19,18.41 L9.99,18.20 L9.76,18.06 L9.53,17.96 L9.29,17.87 L9.04,17.81 L8.74,17.81 L8.35,17.95 L7.83,18.24 L7.29,18.49 L6.84,18.55 L6.49,18.45 L6.21,18.27 L5.95,18.05 L5.73,17.79 L5.55,17.51 L5.45,17.16 L5.51,16.71 L5.76,16.17 L6.05,15.65 L6.19,15.26 L6.19,14.96 L6.13,14.71 L6.04,14.47 L5.94,14.24 L5.80,14.01 L5.59,13.81 L5.21,13.63 L4.64,13.46 L4.08,13.25 L3.72,12.98 L3.55,12.67 L3.47,12.34 L3.45,12.00 L3.47,11.66 L3.55,11.33 L3.72,11.02 L4.08,10.75 L4.64,10.54 L5.21,10.37 L5.59,10.19 L5.80,9.99 L5.94,9.76 L6.04,9.53 L6.13,9.29 L6.19,9.04 L6.19,8.74 L6.05,8.35 L5.76,7.83 L5.51,7.29 L5.45,6.84 L5.55,6.49 L5.73,6.21 L5.95,5.95 L6.21,5.73 L6.49,5.55 L6.84,5.45 L7.29,5.51 L7.83,5.76 L8.35,6.05 L8.74,6.19 L9.04,6.19 L9.29,6.13 L9.53,6.04 L9.76,5.94 L9.99,5.80 L10.19,5.59 L10.37,5.21 L10.54,4.64 L10.75,4.08 L11.02,3.72 L11.33,3.55 L11.66,3.47Z" fill="none" stroke="#4a4f55" stroke-width="1.68" stroke-linejoin="round"/><circle cx="12" cy="12" r="2.9" fill="none" stroke="#4a4f55" stroke-width="1.68"/></svg>
<svg class="abs" style="left:1024.3px;top:889.5px" width="20" height="20" viewBox="0 0 24 24"><path d="M12.00,3.45 L12.34,3.47 L12.67,3.55 L12.98,3.72 L13.25,4.08 L13.46,4.64 L13.63,5.21 L13.81,5.59 L14.01,5.80 L14.24,5.94 L14.47,6.04 L14.71,6.13 L14.96,6.19 L15.26,6.19 L15.65,6.05 L16.17,5.76 L16.71,5.51 L17.16,5.45 L17.51,5.55 L17.79,5.73 L18.05,5.95 L18.27,6.21 L18.45,6.49 L18.55,6.84 L18.49,7.29 L18.24,7.83 L17.95,8.35 L17.81,8.74 L17.81,9.04 L17.87,9.29 L17.96,9.53 L18.06,9.76 L18.20,9.99 L18.41,10.19 L18.79,10.37 L19.36,10.54 L19.92,10.75 L20.28,11.02 L20.45,11.33 L20.53,11.66 L20.55,12.00 L20.53,12.34 L20.45,12.67 L20.28,12.98 L19.92,13.25 L19.36,13.46 L18.79,13.63 L18.41,13.81 L18.20,14.01 L18.06,14.24 L17.96,14.47 L17.87,14.71 L17.81,14.96 L17.81,15.26 L17.95,15.65 L18.24,16.17 L18.49,16.71 L18.55,17.16 L18.45,17.51 L18.27,17.79 L18.05,18.05 L17.79,18.27 L17.51,18.45 L17.16,18.55 L16.71,18.49 L16.17,18.24 L15.65,17.95 L15.26,17.81 L14.96,17.81 L14.71,17.87 L14.47,17.96 L14.24,18.06 L14.01,18.20 L13.81,18.41 L13.63,18.79 L13.46,19.36 L13.25,19.92 L12.98,20.28 L12.67,20.45 L12.34,20.53 L12.00,20.55 L11.66,20.53 L11.33,20.45 L11.02,20.28 L10.75,19.92 L10.54,19.36 L10.37,18.79 L10.19,18.41 L9.99,18.20 L9.76,18.06 L9.53,17.96 L9.29,17.87 L9.04,17.81 L8.74,17.81 L8.35,17.95 L7.83,18.24 L7.29,18.49 L6.84,18.55 L6.49,18.45 L6.21,18.27 L5.95,18.05 L5.73,17.79 L5.55,17.51 L5.45,17.16 L5.51,16.71 L5.76,16.17 L6.05,15.65 L6.19,15.26 L6.19,14.96 L6.13,14.71 L6.04,14.47 L5.94,14.24 L5.80,14.01 L5.59,13.81 L5.21,13.63 L4.64,13.46 L4.08,13.25 L3.72,12.98 L3.55,12.67 L3.47,12.34 L3.45,12.00 L3.47,11.66 L3.55,11.33 L3.72,11.02 L4.08,10.75 L4.64,10.54 L5.21,10.37 L5.59,10.19 L5.80,9.99 L5.94,9.76 L6.04,9.53 L6.13,9.29 L6.19,9.04 L6.19,8.74 L6.05,8.35 L5.76,7.83 L5.51,7.29 L5.45,6.84 L5.55,6.49 L5.73,6.21 L5.95,5.95 L6.21,5.73 L6.49,5.55 L6.84,5.45 L7.29,5.51 L7.83,5.76 L8.35,6.05 L8.74,6.19 L9.04,6.19 L9.29,6.13 L9.53,6.04 L9.76,5.94 L9.99,5.80 L10.19,5.59 L10.37,5.21 L10.54,4.64 L10.75,4.08 L11.02,3.72 L11.33,3.55 L11.66,3.47Z" fill="none" stroke="#4a4f55" stroke-width="1.68" stroke-linejoin="round"/><circle cx="12" cy="12" r="2.9" fill="none" stroke="#4a4f55" stroke-width="1.68"/></svg>
<svg class="abs" style="left:1310.3px;top:862.0px" width="20" height="20" viewBox="0 0 24 24"><path d="M12.00,3.45 L12.34,3.47 L12.67,3.55 L12.98,3.72 L13.25,4.08 L13.46,4.64 L13.63,5.21 L13.81,5.59 L14.01,5.80 L14.24,5.94 L14.47,6.04 L14.71,6.13 L14.96,6.19 L15.26,6.19 L15.65,6.05 L16.17,5.76 L16.71,5.51 L17.16,5.45 L17.51,5.55 L17.79,5.73 L18.05,5.95 L18.27,6.21 L18.45,6.49 L18.55,6.84 L18.49,7.29 L18.24,7.83 L17.95,8.35 L17.81,8.74 L17.81,9.04 L17.87,9.29 L17.96,9.53 L18.06,9.76 L18.20,9.99 L18.41,10.19 L18.79,10.37 L19.36,10.54 L19.92,10.75 L20.28,11.02 L20.45,11.33 L20.53,11.66 L20.55,12.00 L20.53,12.34 L20.45,12.67 L20.28,12.98 L19.92,13.25 L19.36,13.46 L18.79,13.63 L18.41,13.81 L18.20,14.01 L18.06,14.24 L17.96,14.47 L17.87,14.71 L17.81,14.96 L17.81,15.26 L17.95,15.65 L18.24,16.17 L18.49,16.71 L18.55,17.16 L18.45,17.51 L18.27,17.79 L18.05,18.05 L17.79,18.27 L17.51,18.45 L17.16,18.55 L16.71,18.49 L16.17,18.24 L15.65,17.95 L15.26,17.81 L14.96,17.81 L14.71,17.87 L14.47,17.96 L14.24,18.06 L14.01,18.20 L13.81,18.41 L13.63,18.79 L13.46,19.36 L13.25,19.92 L12.98,20.28 L12.67,20.45 L12.34,20.53 L12.00,20.55 L11.66,20.53 L11.33,20.45 L11.02,20.28 L10.75,19.92 L10.54,19.36 L10.37,18.79 L10.19,18.41 L9.99,18.20 L9.76,18.06 L9.53,17.96 L9.29,17.87 L9.04,17.81 L8.74,17.81 L8.35,17.95 L7.83,18.24 L7.29,18.49 L6.84,18.55 L6.49,18.45 L6.21,18.27 L5.95,18.05 L5.73,17.79 L5.55,17.51 L5.45,17.16 L5.51,16.71 L5.76,16.17 L6.05,15.65 L6.19,15.26 L6.19,14.96 L6.13,14.71 L6.04,14.47 L5.94,14.24 L5.80,14.01 L5.59,13.81 L5.21,13.63 L4.64,13.46 L4.08,13.25 L3.72,12.98 L3.55,12.67 L3.47,12.34 L3.45,12.00 L3.47,11.66 L3.55,11.33 L3.72,11.02 L4.08,10.75 L4.64,10.54 L5.21,10.37 L5.59,10.19 L5.80,9.99 L5.94,9.76 L6.04,9.53 L6.13,9.29 L6.19,9.04 L6.19,8.74 L6.05,8.35 L5.76,7.83 L5.51,7.29 L5.45,6.84 L5.55,6.49 L5.73,6.21 L5.95,5.95 L6.21,5.73 L6.49,5.55 L6.84,5.45 L7.29,5.51 L7.83,5.76 L8.35,6.05 L8.74,6.19 L9.04,6.19 L9.29,6.13 L9.53,6.04 L9.76,5.94 L9.99,5.80 L10.19,5.59 L10.37,5.21 L10.54,4.64 L10.75,4.08 L11.02,3.72 L11.33,3.55 L11.66,3.47Z" fill="none" stroke="#4a4f55" stroke-width="1.68" stroke-linejoin="round"/><circle cx="12" cy="12" r="2.9" fill="none" stroke="#4a4f55" stroke-width="1.68"/></svg>
<svg class="abs" style="left:1310.3px;top:889.5px" width="20" height="20" viewBox="0 0 24 24"><path d="M12.00,3.45 L12.34,3.47 L12.67,3.55 L12.98,3.72 L13.25,4.08 L13.46,4.64 L13.63,5.21 L13.81,5.59 L14.01,5.80 L14.24,5.94 L14.47,6.04 L14.71,6.13 L14.96,6.19 L15.26,6.19 L15.65,6.05 L16.17,5.76 L16.71,5.51 L17.16,5.45 L17.51,5.55 L17.79,5.73 L18.05,5.95 L18.27,6.21 L18.45,6.49 L18.55,6.84 L18.49,7.29 L18.24,7.83 L17.95,8.35 L17.81,8.74 L17.81,9.04 L17.87,9.29 L17.96,9.53 L18.06,9.76 L18.20,9.99 L18.41,10.19 L18.79,10.37 L19.36,10.54 L19.92,10.75 L20.28,11.02 L20.45,11.33 L20.53,11.66 L20.55,12.00 L20.53,12.34 L20.45,12.67 L20.28,12.98 L19.92,13.25 L19.36,13.46 L18.79,13.63 L18.41,13.81 L18.20,14.01 L18.06,14.24 L17.96,14.47 L17.87,14.71 L17.81,14.96 L17.81,15.26 L17.95,15.65 L18.24,16.17 L18.49,16.71 L18.55,17.16 L18.45,17.51 L18.27,17.79 L18.05,18.05 L17.79,18.27 L17.51,18.45 L17.16,18.55 L16.71,18.49 L16.17,18.24 L15.65,17.95 L15.26,17.81 L14.96,17.81 L14.71,17.87 L14.47,17.96 L14.24,18.06 L14.01,18.20 L13.81,18.41 L13.63,18.79 L13.46,19.36 L13.25,19.92 L12.98,20.28 L12.67,20.45 L12.34,20.53 L12.00,20.55 L11.66,20.53 L11.33,20.45 L11.02,20.28 L10.75,19.92 L10.54,19.36 L10.37,18.79 L10.19,18.41 L9.99,18.20 L9.76,18.06 L9.53,17.96 L9.29,17.87 L9.04,17.81 L8.74,17.81 L8.35,17.95 L7.83,18.24 L7.29,18.49 L6.84,18.55 L6.49,18.45 L6.21,18.27 L5.95,18.05 L5.73,17.79 L5.55,17.51 L5.45,17.16 L5.51,16.71 L5.76,16.17 L6.05,15.65 L6.19,15.26 L6.19,14.96 L6.13,14.71 L6.04,14.47 L5.94,14.24 L5.80,14.01 L5.59,13.81 L5.21,13.63 L4.64,13.46 L4.08,13.25 L3.72,12.98 L3.55,12.67 L3.47,12.34 L3.45,12.00 L3.47,11.66 L3.55,11.33 L3.72,11.02 L4.08,10.75 L4.64,10.54 L5.21,10.37 L5.59,10.19 L5.80,9.99 L5.94,9.76 L6.04,9.53 L6.13,9.29 L6.19,9.04 L6.19,8.74 L6.05,8.35 L5.76,7.83 L5.51,7.29 L5.45,6.84 L5.55,6.49 L5.73,6.21 L5.95,5.95 L6.21,5.73 L6.49,5.55 L6.84,5.45 L7.29,5.51 L7.83,5.76 L8.35,6.05 L8.74,6.19 L9.04,6.19 L9.29,6.13 L9.53,6.04 L9.76,5.94 L9.99,5.80 L10.19,5.59 L10.37,5.21 L10.54,4.64 L10.75,4.08 L11.02,3.72 L11.33,3.55 L11.66,3.47Z" fill="none" stroke="#4a4f55" stroke-width="1.68" stroke-linejoin="round"/><circle cx="12" cy="12" r="2.9" fill="none" stroke="#4a4f55" stroke-width="1.68"/></svg>
<div class="abs tx" style="left:482px;top:864.7px;font-size:13px;line-height:15.6px;color:#3c4043;font-weight:normal;">alerts</div>
<div class="abs tx" style="left:482px;top:891.7px;font-size:13px;line-height:15.6px;color:#3c4043;font-weight:normal;">Concurrency <span class="m">Concurrency</span></div>
<div class="abs tx" style="left:767px;top:864.7px;font-size:13px;line-height:15.6px;color:#3c4043;font-weight:normal;">api4</div>
<div class="abs tx" style="left:767px;top:891.7px;font-size:13px;line-height:15.6px;color:#3c4043;font-weight:normal;">Concurrency <span class="m">Concurrency</span></div>
<div class="abs tx" style="left:1053px;top:864.7px;font-size:13px;line-height:15.6px;color:#3c4043;font-weight:normal;">suggest</div>
<div class="abs tx" style="left:1053px;top:891.7px;font-size:13px;line-height:15.6px;color:#3c4043;font-weight:normal;">Concurrency <span class="m">Concurrency</span></div>
<div class="abs tx" style="left:29px;width:25px;text-align:right;top:918.5px;font-size:13px;line-height:16px;color:#3c4043">1</div>
<div class="abs tx" style="left:64.5px;top:918.7px;font-size:13px;line-height:15.6px;color:#3c4043;font-weight:normal;">2025-07-10 23:50:00</div>
<svg class="abs" style="left:746.0px;top:921.5px" width="10" height="10"><circle cx="5" cy="5" r="3.2" fill="none" stroke="#62666b" stroke-width="1"/><path d="M1.5,8.5 L8.5,1.5" stroke="#62666b" stroke-width="1"/></svg>
<div class="abs tx" style="left:942px;width:100px;text-align:right;top:918.5px;font-size:13.3px;line-height:16px;color:#3c4043">0.0037</div>
<div class="abs tx" style="left:1214px;width:100px;text-align:right;top:918.5px;font-size:13.3px;line-height:16px;color:#3c4043">0.0076</div>
<div class="abs tx" style="left:29px;width:25px;text-align:right;top:944.0px;font-size:13px;line-height:16px;color:#3c4043">2</div>
<div class="abs tx" style="left:64.5px;top:944.2px;font-size:13px;line-height:15.6px;color:#3c4043;font-weight:normal;">2025-07-10 23:40:00</div>
<svg class="abs" style="left:746.0px;top:946.98px" width="10" height="10"><circle cx="5" cy="5" r="3.2" fill="none" stroke="#62666b" stroke-width="1"/><path d="M1.5,8.5 L8.5,1.5" stroke="#62666b" stroke-width="1"/></svg>
<svg class="abs" style="left:1031.5px;top:946.98px" width="10" height="10"><circle cx="5" cy="5" r="3.2" fill="none" stroke="#62666b" stroke-width="1"/><path d="M1.5,8.5 L8.5,1.5" stroke="#62666b" stroke-width="1"/></svg>
<div class="abs tx" style="left:1214px;width:100px;text-align:right;top:944.0px;font-size:13.3px;line-height:16px;color:#3c4043">0.0246</div>
<div class="abs tx" style="left:29px;width:25px;text-align:right;top:969.5px;font-size:13px;line-height:16px;color:#3c4043">3</div>
<div class="abs tx" style="left:64.5px;top:969.7px;font-size:13px;line-height:15.6px;color:#3c4043;font-weight:normal;">2025-07-10 23:30:00</div>
<svg class="abs" style="left:746.0px;top:972.46px" width="10" height="10"><circle cx="5" cy="5" r="3.2" fill="none" stroke="#62666b" stroke-width="1"/><path d="M1.5,8.5 L8.5,1.5" stroke="#62666b" stroke-width="1"/></svg>
<svg class="abs" style="left:1031.5px;top:972.46px" width="10" height="10"><circle cx="5" cy="5" r="3.2" fill="none" stroke="#62666b" stroke-width="1"/><path d="M1.5,8.5 L8.5,1.5" stroke="#62666b" stroke-width="1"/></svg>
<div class="abs tx" style="left:1214px;width:100px;text-align:right;top:969.5px;font-size:13.3px;line-height:16px;color:#3c4043">0.0083</div>
<div class="abs tx" style="left:29px;width:25px;text-align:right;top:994.9px;font-size:13px;line-height:16px;color:#3c4043">4</div>
<div class="abs tx" style="left:64.5px;top:995.1px;font-size:13px;line-height:15.6px;color:#3c4043;font-weight:normal;">2025-07-10 23:20:00</div>
<svg class="abs" style="left:746.0px;top:997.94px" width="10" height="10"><circle cx="5" cy="5" r="3.2" fill="none" stroke="#62666b" stroke-width="1"/><path d="M1.5,8.5 L8.5,1.5" stroke="#62666b" stroke-width="1"/></svg>
<svg class="abs" style="left:1031.5px;top:997.94px" width="10" height="10"><circle cx="5" cy="5" r="3.2" fill="none" stroke="#62666b" stroke-width="1"/><path d="M1.5,8.5 L8.5,1.5" stroke="#62666b" stroke-width="1"/></svg>
<div class="abs tx" style="left:1214px;width:100px;text-align:right;top:994.9px;font-size:13.3px;line-height:16px;color:#3c4043">0.0710</div>
<div class="abs tx" style="left:29px;width:25px;text-align:right;top:1020.4px;font-size:13px;line-height:16px;color:#3c4043">5</div>
<div class="abs tx" style="left:64.5px;top:1020.6px;font-size:13px;line-height:15.6px;color:#3c4043;font-weight:normal;">2025-07-10 23:10:00</div>
<svg class="abs" style="left:746.0px;top:1023.4200000000001px" width="10" height="10"><circle cx="5" cy="5" r="3.2" fill="none" stroke="#62666b" stroke-width="1"/><path d="M1.5,8.5 L8.5,1.5" stroke="#62666b" stroke-width="1"/></svg>
<svg class="abs" style="left:1031.5px;top:1023.4200000000001px" width="10" height="10"><circle cx="5" cy="5" r="3.2" fill="none" stroke="#62666b" stroke-width="1"/><path d="M1.5,8.5 L8.5,1.5" stroke="#62666b" stroke-width="1"/></svg>
<div class="abs tx" style="left:1214px;width:100px;text-align:right;top:1020.4px;font-size:13.3px;line-height:16px;color:#3c4043">0.0308</div>
<div class="abs tx" style="left:29px;width:25px;text-align:right;top:1045.9px;font-size:13px;line-height:16px;color:#3c4043">6</div>
<div class="abs tx" style="left:64.5px;top:1046.1px;font-size:13px;line-height:15.6px;color:#3c4043;font-weight:normal;">2025-07-10 23:00:00</div>
<div class="abs tx" style="left:656.5px;width:100px;text-align:right;top:1045.9px;font-size:13.3px;line-height:16px;color:#3c4043">0.0013</div>
<div class="abs tx" style="left:942px;width:100px;text-align:right;top:1045.9px;font-size:13.3px;line-height:16px;color:#3c4043">0.0013</div>
<div class="abs tx" style="left:1214px;width:100px;text-align:right;top:1045.9px;font-size:13.3px;line-height:16px;color:#3c4043">0.0054</div>
<div class="abs tx" style="left:29px;width:25px;text-align:right;top:1071.4px;font-size:13px;line-height:16px;color:#3c4043">7</div>
<div class="abs tx" style="left:64.5px;top:1071.6px;font-size:13px;line-height:15.6px;color:#3c4043;font-weight:normal;">2025-07-10 22:50:00</div>
<svg class="abs" style="left:746.0px;top:1074.38px" width="10" height="10"><circle cx="5" cy="5" r="3.2" fill="none" stroke="#62666b" stroke-width="1"/><path d="M1.5,8.5 L8.5,1.5" stroke="#62666b" stroke-width="1"/></svg>
<div class="abs tx" style="left:942px;width:100px;text-align:right;top:1071.4px;font-size:13.3px;line-height:16px;color:#3c4043">0.0045</div>
<div class="abs tx" style="left:1214px;width:100px;text-align:right;top:1071.4px;font-size:13.3px;line-height:16px;color:#3c4043">0.1127</div>
<div class="abs tx" style="left:29px;width:25px;text-align:right;top:1096.9px;font-size:13px;line-height:16px;color:#3c4043">8</div>
<div class="abs tx" style="left:64.5px;top:1097.1px;font-size:13px;line-height:15.6px;color:#3c4043;font-weight:normal;">2025-07-10 22:40:00</div>
<svg class="abs" style="left:746.0px;top:1099.8600000000001px" width="10" height="10"><circle cx="5" cy="5" r="3.2" fill="none" stroke="#62666b" stroke-width="1"/><path d="M1.5,8.5 L8.5,1.5" stroke="#62666b" stroke-width="1"/></svg>
<div class="abs tx" style="left:942px;width:100px;text-align:right;top:1096.9px;font-size:13.3px;line-height:16px;color:#3c4043">0.0061</div>
<div class="abs tx" style="left:1214px;width:100px;text-align:right;top:1096.9px;font-size:13.3px;line-height:16px;color:#3c4043">0.1161</div>
<div class="abs tx" style="left:29px;width:25px;text-align:right;top:1122.3px;font-size:13px;line-height:16px;color:#3c4043">9</div>
<div class="abs tx" style="left:64.5px;top:1122.5px;font-size:13px;line-height:15.6px;color:#3c4043;font-weight:normal;">2025-07-10 22:30:00</div>
<svg class="abs" style="left:746.0px;top:1125.34px" width="10" height="10"><circle cx="5" cy="5" r="3.2" fill="none" stroke="#62666b" stroke-width="1"/><path d="M1.5,8.5 L8.5,1.5" stroke="#62666b" stroke-width="1"/></svg>
<div class="abs tx" style="left:942px;width:100px;text-align:right;top:1122.3px;font-size:13.3px;line-height:16px;color:#3c4043">0.0116</div>
<div class="abs tx" style="left:1214px;width:100px;text-align:right;top:1122.3px;font-size:13.3px;line-height:16px;color:#3c4043">0.1053</div>
<div class="abs tx" style="left:29px;width:25px;text-align:right;top:1147.8px;font-size:13px;line-height:16px;color:#3c4043">10</div>
<div class="abs tx" style="left:64.5px;top:1148.0px;font-size:13px;line-height:15.6px;color:#3c4043;font-weight:normal;">2025-07-10 22:20:00</div>
<svg class="abs" style="left:746.0px;top:1150.82px" width="10" height="10"><circle cx="5" cy="5" r="3.2" fill="none" stroke="#62666b" stroke-width="1"/><path d="M1.5,8.5 L8.5,1.5" stroke="#62666b" stroke-width="1"/></svg>
<div class="abs tx" style="left:942px;width:100px;text-align:right;top:1147.8px;font-size:13.3px;line-height:16px;color:#3c4043">0.0037</div>
<div class="abs tx" style="left:1214px;width:100px;text-align:right;top:1147.8px;font-size:13.3px;line-height:16px;color:#3c4043">0.1229</div>
<div class="abs tx" style="left:29px;width:25px;text-align:right;top:1173.3px;font-size:13px;line-height:16px;color:#3c4043">11</div>
<div class="abs tx" style="left:64.5px;top:1173.5px;font-size:13px;line-height:15.6px;color:#3c4043;font-weight:normal;">2025-07-10 22:10:00</div>
<div class="abs tx" style="left:656.5px;width:100px;text-align:right;top:1173.3px;font-size:13.3px;line-height:16px;color:#3c4043">0.0011</div>
<div class="abs tx" style="left:942px;width:100px;text-align:right;top:1173.3px;font-size:13.3px;line-height:16px;color:#3c4043">0.0039</div>
<div class="abs tx" style="left:1214px;width:100px;text-align:right;top:1173.3px;font-size:13.3px;line-height:16px;color:#3c4043">0.1176</div>
<div class="abs tx" style="left:29px;width:25px;text-align:right;top:1198.8px;font-size:13px;line-height:16px;color:#3c4043">12</div>
<div class="abs tx" style="left:64.5px;top:1199.0px;font-size:13px;line-height:15.6px;color:#3c4043;font-weight:normal;">2025-07-10 22:00:00</div>
<div class="abs tx" style="left:656.5px;width:100px;text-align:right;top:1198.8px;font-size:13.3px;line-height:16px;color:#3c4043">0.0040</div>
<div class="abs tx" style="left:942px;width:100px;text-align:right;top:1198.8px;font-size:13.3px;line-height:16px;color:#3c4043">0.0124</div>
<div class="abs tx" style="left:1214px;width:100px;text-align:right;top:1198.8px;font-size:13.3px;line-height:16px;color:#3c4043">0.0974</div>
<div class="abs tx" style="left:29px;width:25px;text-align:right;top:1224.3px;font-size:13px;line-height:16px;color:#3c4043">13</div>
<div class="abs tx" style="left:64.5px;top:1224.5px;font-size:13px;line-height:15.6px;color:#3c4043;font-weight:normal;">2025-07-10 21:50:00</div>
<svg class="abs" style="left:746.0px;top:1227.26px" width="10" height="10"><circle cx="5" cy="5" r="3.2" fill="none" stroke="#62666b" stroke-width="1"/><path d="M1.5,8.5 L8.5,1.5" stroke="#62666b" stroke-width="1"/></svg>
<div class="abs tx" style="left:942px;width:100px;text-align:right;top:1224.3px;font-size:13.3px;line-height:16px;color:#3c4043">0.0046</div>
<div class="abs tx" style="left:1214px;width:100px;text-align:right;top:1224.3px;font-size:13.3px;line-height:16px;color:#3c4043">0.1176</div>
<div class="abs" style="left:29px;top:1237px;width:1320px;height:18px;background:#fff"></div>
</div></body></html>
